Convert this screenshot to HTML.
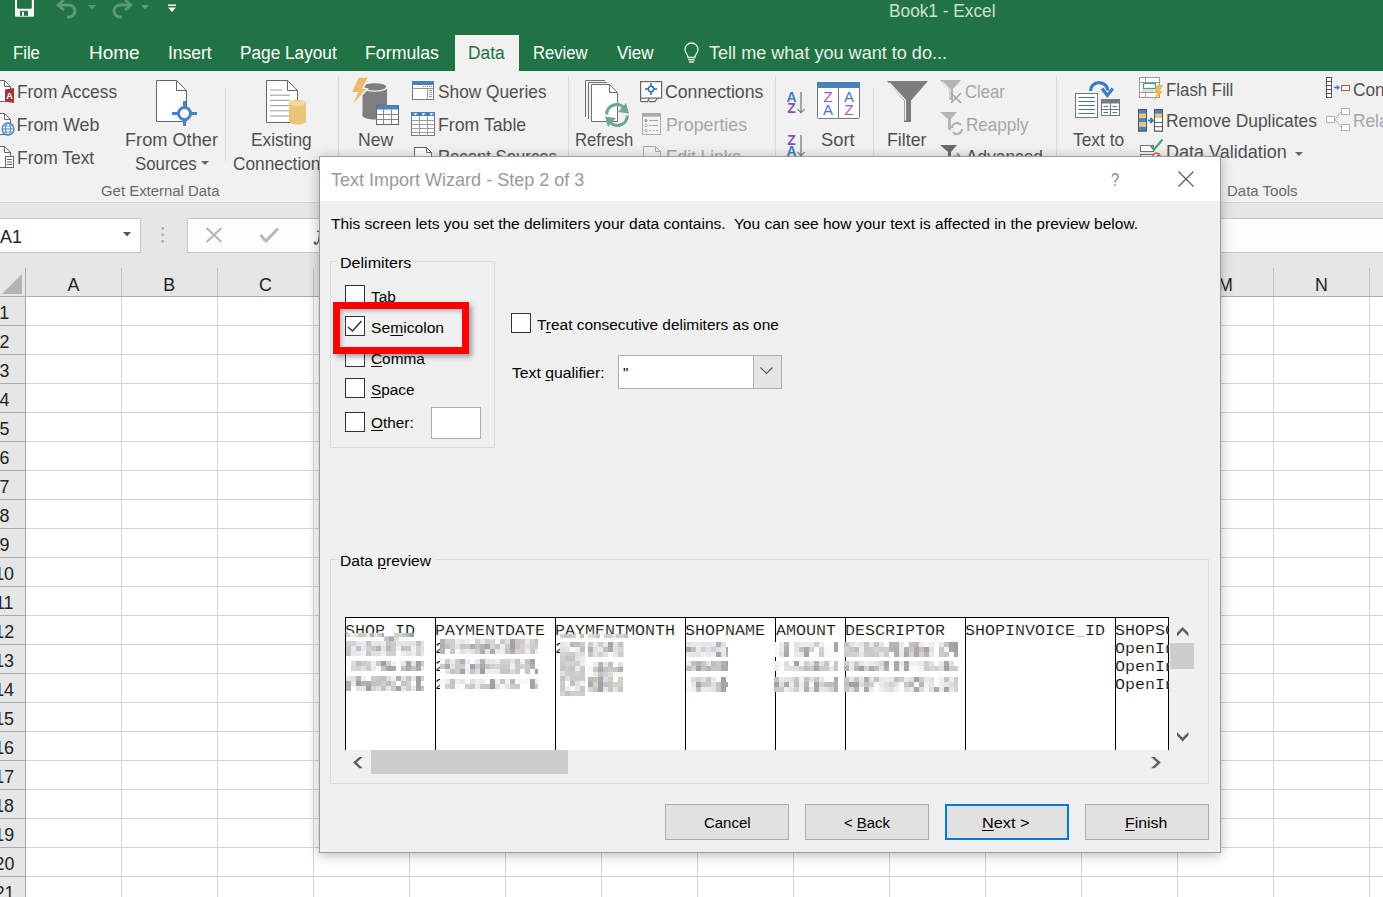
<!DOCTYPE html>
<html><head><meta charset="utf-8"><title>Excel</title>
<style>
html,body{margin:0;padding:0;}
body{width:1383px;height:897px;overflow:hidden;position:relative;background:#fff;font-family:'Liberation Sans', sans-serif;}
.t{position:absolute;white-space:pre;line-height:1;transform-origin:0 0;}
u{text-decoration:underline;text-underline-offset:2px;text-decoration-thickness:1px;}
</style></head><body>
<div style="position:absolute;left:0px;top:0px;width:1383px;height:71px;background:#217346;"></div><div style="position:absolute;left:455px;top:35px;width:64px;height:36px;background:#f1f1f1;"></div><div style="position:absolute;left:0px;top:71px;width:1383px;height:131px;background:#f1f1f1;"></div><div style="position:absolute;left:0px;top:202px;width:1383px;height:1px;background:#d5d5d5;"></div><div style="position:absolute;left:0px;top:203px;width:1383px;height:94px;background:#e6e6e6;"></div><div style="position:absolute;left:-2px;top:218px;width:143px;height:35px;background:#ffffff;box-sizing:border-box;border:1px solid #c6c6c6;"></div><div style="position:absolute;left:187px;top:218px;width:1300px;height:35px;background:#fdfdfd;box-sizing:border-box;border:1px solid #c6c6c6;"></div><div style="position:absolute;left:0px;top:297px;width:1383px;height:600px;background:#ffffff;"></div><div style="position:absolute;left:0px;top:297px;width:25px;height:600px;background:#e6e6e6;"></div><div style="position:absolute;left:25px;top:325px;width:1358px;height:1px;background:#d4d4d4;"></div><div style="position:absolute;left:0px;top:325px;width:25px;height:1px;background:#ababab;"></div><div style="position:absolute;left:25px;top:354px;width:1358px;height:1px;background:#d4d4d4;"></div><div style="position:absolute;left:0px;top:354px;width:25px;height:1px;background:#ababab;"></div><div style="position:absolute;left:25px;top:383px;width:1358px;height:1px;background:#d4d4d4;"></div><div style="position:absolute;left:0px;top:383px;width:25px;height:1px;background:#ababab;"></div><div style="position:absolute;left:25px;top:412px;width:1358px;height:1px;background:#d4d4d4;"></div><div style="position:absolute;left:0px;top:412px;width:25px;height:1px;background:#ababab;"></div><div style="position:absolute;left:25px;top:441px;width:1358px;height:1px;background:#d4d4d4;"></div><div style="position:absolute;left:0px;top:441px;width:25px;height:1px;background:#ababab;"></div><div style="position:absolute;left:25px;top:470px;width:1358px;height:1px;background:#d4d4d4;"></div><div style="position:absolute;left:0px;top:470px;width:25px;height:1px;background:#ababab;"></div><div style="position:absolute;left:25px;top:499px;width:1358px;height:1px;background:#d4d4d4;"></div><div style="position:absolute;left:0px;top:499px;width:25px;height:1px;background:#ababab;"></div><div style="position:absolute;left:25px;top:528px;width:1358px;height:1px;background:#d4d4d4;"></div><div style="position:absolute;left:0px;top:528px;width:25px;height:1px;background:#ababab;"></div><div style="position:absolute;left:25px;top:557px;width:1358px;height:1px;background:#d4d4d4;"></div><div style="position:absolute;left:0px;top:557px;width:25px;height:1px;background:#ababab;"></div><div style="position:absolute;left:25px;top:586px;width:1358px;height:1px;background:#d4d4d4;"></div><div style="position:absolute;left:0px;top:586px;width:25px;height:1px;background:#ababab;"></div><div style="position:absolute;left:25px;top:615px;width:1358px;height:1px;background:#d4d4d4;"></div><div style="position:absolute;left:0px;top:615px;width:25px;height:1px;background:#ababab;"></div><div style="position:absolute;left:25px;top:644px;width:1358px;height:1px;background:#d4d4d4;"></div><div style="position:absolute;left:0px;top:644px;width:25px;height:1px;background:#ababab;"></div><div style="position:absolute;left:25px;top:673px;width:1358px;height:1px;background:#d4d4d4;"></div><div style="position:absolute;left:0px;top:673px;width:25px;height:1px;background:#ababab;"></div><div style="position:absolute;left:25px;top:702px;width:1358px;height:1px;background:#d4d4d4;"></div><div style="position:absolute;left:0px;top:702px;width:25px;height:1px;background:#ababab;"></div><div style="position:absolute;left:25px;top:731px;width:1358px;height:1px;background:#d4d4d4;"></div><div style="position:absolute;left:0px;top:731px;width:25px;height:1px;background:#ababab;"></div><div style="position:absolute;left:25px;top:760px;width:1358px;height:1px;background:#d4d4d4;"></div><div style="position:absolute;left:0px;top:760px;width:25px;height:1px;background:#ababab;"></div><div style="position:absolute;left:25px;top:789px;width:1358px;height:1px;background:#d4d4d4;"></div><div style="position:absolute;left:0px;top:789px;width:25px;height:1px;background:#ababab;"></div><div style="position:absolute;left:25px;top:818px;width:1358px;height:1px;background:#d4d4d4;"></div><div style="position:absolute;left:0px;top:818px;width:25px;height:1px;background:#ababab;"></div><div style="position:absolute;left:25px;top:847px;width:1358px;height:1px;background:#d4d4d4;"></div><div style="position:absolute;left:0px;top:847px;width:25px;height:1px;background:#ababab;"></div><div style="position:absolute;left:25px;top:876px;width:1358px;height:1px;background:#d4d4d4;"></div><div style="position:absolute;left:0px;top:876px;width:25px;height:1px;background:#ababab;"></div><div style="position:absolute;left:25px;top:905px;width:1358px;height:1px;background:#d4d4d4;"></div><div style="position:absolute;left:0px;top:905px;width:25px;height:1px;background:#ababab;"></div><div style="position:absolute;left:121px;top:268px;width:1px;height:28px;background:#c6c6c6;"></div><div style="position:absolute;left:121px;top:297px;width:1px;height:600px;background:#d4d4d4;"></div><div style="position:absolute;left:217px;top:268px;width:1px;height:28px;background:#c6c6c6;"></div><div style="position:absolute;left:217px;top:297px;width:1px;height:600px;background:#d4d4d4;"></div><div style="position:absolute;left:313px;top:268px;width:1px;height:28px;background:#c6c6c6;"></div><div style="position:absolute;left:313px;top:297px;width:1px;height:600px;background:#d4d4d4;"></div><div style="position:absolute;left:409px;top:268px;width:1px;height:28px;background:#c6c6c6;"></div><div style="position:absolute;left:409px;top:297px;width:1px;height:600px;background:#d4d4d4;"></div><div style="position:absolute;left:505px;top:268px;width:1px;height:28px;background:#c6c6c6;"></div><div style="position:absolute;left:505px;top:297px;width:1px;height:600px;background:#d4d4d4;"></div><div style="position:absolute;left:601px;top:268px;width:1px;height:28px;background:#c6c6c6;"></div><div style="position:absolute;left:601px;top:297px;width:1px;height:600px;background:#d4d4d4;"></div><div style="position:absolute;left:697px;top:268px;width:1px;height:28px;background:#c6c6c6;"></div><div style="position:absolute;left:697px;top:297px;width:1px;height:600px;background:#d4d4d4;"></div><div style="position:absolute;left:793px;top:268px;width:1px;height:28px;background:#c6c6c6;"></div><div style="position:absolute;left:793px;top:297px;width:1px;height:600px;background:#d4d4d4;"></div><div style="position:absolute;left:889px;top:268px;width:1px;height:28px;background:#c6c6c6;"></div><div style="position:absolute;left:889px;top:297px;width:1px;height:600px;background:#d4d4d4;"></div><div style="position:absolute;left:985px;top:268px;width:1px;height:28px;background:#c6c6c6;"></div><div style="position:absolute;left:985px;top:297px;width:1px;height:600px;background:#d4d4d4;"></div><div style="position:absolute;left:1081px;top:268px;width:1px;height:28px;background:#c6c6c6;"></div><div style="position:absolute;left:1081px;top:297px;width:1px;height:600px;background:#d4d4d4;"></div><div style="position:absolute;left:1177px;top:268px;width:1px;height:28px;background:#c6c6c6;"></div><div style="position:absolute;left:1177px;top:297px;width:1px;height:600px;background:#d4d4d4;"></div><div style="position:absolute;left:1273px;top:268px;width:1px;height:28px;background:#c6c6c6;"></div><div style="position:absolute;left:1273px;top:297px;width:1px;height:600px;background:#d4d4d4;"></div><div style="position:absolute;left:1369px;top:268px;width:1px;height:28px;background:#c6c6c6;"></div><div style="position:absolute;left:1369px;top:297px;width:1px;height:600px;background:#d4d4d4;"></div><div style="position:absolute;left:0px;top:296px;width:1383px;height:1px;background:#ababab;"></div><div style="position:absolute;left:25px;top:268px;width:1px;height:629px;background:#ababab;"></div><svg style="position:absolute;left:0px;top:270px;overflow:visible;" width="24" height="26" viewBox="0 0 24 26"><polygon points="2,24 22,24 22,4" fill="#b4b4b4"/></svg><svg style="position:absolute;left:15px;top:-1px;overflow:visible;" width="19" height="18" viewBox="0 0 19 18"><rect x="0" y="0" width="19" height="17.7" rx="1.2" fill="#f4f4f4"/><path d="M2,0 H16.8 V8.7 L15.8,9.7 H3 L2,8.7 Z" fill="#217346"/><rect x="5" y="11.9" width="8" height="4.9" fill="#217346"/><rect x="7" y="12.9" width="2" height="3.9" fill="#f4f4f4"/></svg><svg style="position:absolute;left:56px;top:0px;overflow:visible;" width="24" height="20" viewBox="0 0 24 20"><path d="M4,5 H13 A6,6 0 0 1 13,17 H11" fill="none" stroke="#5d9a75" stroke-width="3"/><path d="M8,0 L2,5 L8,10" fill="none" stroke="#5d9a75" stroke-width="2.6"/></svg><svg style="position:absolute;left:88px;top:5px;overflow:visible;" width="9" height="6" viewBox="0 0 9 6"><polygon points="0,0 8,0 4,4.5" fill="#5d9a75"/></svg><svg style="position:absolute;left:109px;top:0px;overflow:visible;" width="24" height="20" viewBox="0 0 24 20"><path d="M20,5 H11 A6,6 0 0 0 11,17 H13" fill="none" stroke="#5d9a75" stroke-width="3"/><path d="M16,0 L22,5 L16,10" fill="none" stroke="#5d9a75" stroke-width="2.6"/></svg><svg style="position:absolute;left:141px;top:5px;overflow:visible;" width="9" height="6" viewBox="0 0 9 6"><polygon points="0,0 8,0 4,4.5" fill="#5d9a75"/></svg><svg style="position:absolute;left:168px;top:4px;overflow:visible;" width="9" height="9" viewBox="0 0 9 9"><rect x="0" y="0.5" width="8" height="1.4" fill="#fff"/><polygon points="0,3.5 8,3.5 4,8" fill="#fff"/></svg><svg style="position:absolute;left:683px;top:43px;overflow:visible;" width="18" height="22" viewBox="0 0 18 22"><path d="M5,14.5 C5,11 2,10 2,6.5 A6.5,6.5 0 0 1 15,6.5 C15,10 12,11 12,14.5 Z" fill="none" stroke="#e8efe9" stroke-width="1.3"/><rect x="5.2" y="16" width="6.6" height="1.4" fill="#e8efe9"/><rect x="6" y="18.3" width="5" height="1.4" fill="#e8efe9"/></svg><svg style="position:absolute;left:-4px;top:80px;overflow:visible;" width="15" height="22" viewBox="0 0 15 22"><path d="M0.5,0.5 H8.5 L14.5,6.5 V21.5 H0.5 Z" fill="#fff" stroke="#666" stroke-width="1"/><path d="M8.5,0.5 V6.5 H14.5" fill="none" stroke="#666" stroke-width="1"/></svg><svg style="position:absolute;left:5px;top:88px;overflow:visible;" width="10" height="16" viewBox="0 0 10 16"><path d="M0,1.5 L9,0 V15 L0,13.5 Z" fill="#a4373a"/><text x="4.5" y="11" font-family="Liberation Sans" font-size="9" font-weight="bold" fill="#fff" text-anchor="middle">A</text></svg><svg style="position:absolute;left:-4px;top:113px;overflow:visible;" width="15" height="22" viewBox="0 0 15 22"><path d="M0.5,0.5 H8.5 L14.5,6.5 V21.5 H0.5 Z" fill="#fff" stroke="#666" stroke-width="1"/><path d="M8.5,0.5 V6.5 H14.5" fill="none" stroke="#666" stroke-width="1"/></svg><svg style="position:absolute;left:1px;top:122px;overflow:visible;" width="15" height="15" viewBox="0 0 15 15"><circle cx="7" cy="7" r="6" fill="#fff" stroke="#4a82c3" stroke-width="1.3"/><ellipse cx="7" cy="7" rx="2.5" ry="6" fill="none" stroke="#4a82c3" stroke-width="1"/><line x1="1" y1="7" x2="13" y2="7" stroke="#4a82c3" stroke-width="1"/><line x1="2" y1="4" x2="12" y2="4" stroke="#4a82c3" stroke-width="0.8"/><line x1="2" y1="10" x2="12" y2="10" stroke="#4a82c3" stroke-width="0.8"/></svg><svg style="position:absolute;left:-4px;top:146px;overflow:visible;" width="15" height="22" viewBox="0 0 15 22"><path d="M0.5,0.5 H8.5 L14.5,6.5 V21.5 H0.5 Z" fill="#fff" stroke="#666" stroke-width="1"/><path d="M8.5,0.5 V6.5 H14.5" fill="none" stroke="#666" stroke-width="1"/></svg><svg style="position:absolute;left:5px;top:156px;overflow:visible;" width="10" height="13" viewBox="0 0 10 13"><rect x="0.5" y="0.5" width="8" height="11" fill="#fff" stroke="#666"/><line x1="2" y1="3.5" x2="7" y2="3.5" stroke="#666"/><line x1="2" y1="6" x2="7" y2="6" stroke="#666"/><line x1="2" y1="8.5" x2="7" y2="8.5" stroke="#666"/></svg><svg style="position:absolute;left:156px;top:80px;overflow:visible;" width="31" height="42" viewBox="0 0 31 42"><path d="M0.5,0.5 H20.5 L30.5,10.5 V41.5 H0.5 Z" fill="#fff" stroke="#666" stroke-width="1"/><path d="M20.5,0.5 V10.5 H30.5" fill="none" stroke="#666" stroke-width="1"/></svg><svg style="position:absolute;left:172px;top:101px;overflow:visible;" width="25" height="25" viewBox="0 0 25 25"><circle cx="12.5" cy="12.5" r="6" fill="#fff" stroke="#4a82c3" stroke-width="3"/><line x1="12.5" y1="0" x2="12.5" y2="6" stroke="#4a82c3" stroke-width="3"/><line x1="12.5" y1="19" x2="12.5" y2="25" stroke="#4a82c3" stroke-width="3"/><line x1="0" y1="12.5" x2="6" y2="12.5" stroke="#4a82c3" stroke-width="3"/><line x1="19" y1="12.5" x2="25" y2="12.5" stroke="#4a82c3" stroke-width="3"/></svg><svg style="position:absolute;left:201px;top:161px;overflow:visible;" width="9" height="5" viewBox="0 0 9 5"><polygon points="0,0 8,0 4,4" fill="#666"/></svg><div style="position:absolute;left:225px;top:88px;width:1px;height:73px;background:#dadada;"></div><svg style="position:absolute;left:266px;top:80px;overflow:visible;" width="32" height="43" viewBox="0 0 32 43"><path d="M0.5,0.5 H21.5 L31.5,10.5 V42.5 H0.5 Z" fill="#fff" stroke="#666" stroke-width="1"/><path d="M21.5,0.5 V10.5 H31.5" fill="none" stroke="#666" stroke-width="1"/></svg><svg style="position:absolute;left:270px;top:88px;overflow:visible;" width="20" height="30" viewBox="0 0 20 30"><line x1="0" y1="2.0" x2="12" y2="2.0" stroke="#999" stroke-width="1"/><line x1="0" y1="7.2" x2="20" y2="7.2" stroke="#999" stroke-width="1"/><line x1="0" y1="12.4" x2="20" y2="12.4" stroke="#999" stroke-width="1"/><line x1="0" y1="17.6" x2="20" y2="17.6" stroke="#999" stroke-width="1"/><line x1="0" y1="22.8" x2="20" y2="22.8" stroke="#999" stroke-width="1"/><line x1="0" y1="28.0" x2="20" y2="28.0" stroke="#999" stroke-width="1"/></svg><svg style="position:absolute;left:289px;top:100px;overflow:visible;" width="18" height="25" viewBox="0 0 18 25"><rect x="0" y="3" width="17" height="19" fill="#ecc57a"/><ellipse cx="8.5" cy="3.5" rx="8.5" ry="3" fill="#f3d89f" stroke="#ecc57a"/><ellipse cx="8.5" cy="21.5" rx="8.5" ry="3" fill="#ecc57a"/></svg><div style="position:absolute;left:338px;top:76px;width:1px;height:85px;background:#dadada;"></div><svg style="position:absolute;left:362px;top:82px;overflow:visible;" width="26" height="38" viewBox="0 0 26 38"><rect x="0.5" y="4.5" width="24.5" height="29.5" fill="#7f7f7f"/><ellipse cx="12.75" cy="4.8" rx="12.25" ry="4.3" fill="#7f7f7f" stroke="#f4f4f4" stroke-width="1.3"/><ellipse cx="12.75" cy="33.5" rx="12.25" ry="4" fill="#7f7f7f"/></svg><svg style="position:absolute;left:349px;top:75px;overflow:visible;" width="22" height="34" viewBox="0 0 22 34"><polygon points="9.3,2 19.9,2 14.2,13 18.4,14 2,32 8.1,17.8 2,17.5" fill="#e8bd6e" stroke="#f1f1f1" stroke-width="1.6" stroke-linejoin="miter"/></svg><svg style="position:absolute;left:376px;top:105px;overflow:visible;" width="24" height="21" viewBox="0 0 24 21"><rect x="0.5" y="0.5" width="22" height="19" fill="#fff" stroke="#666"/><rect x="0.5" y="0.5" width="22" height="4" fill="#4a82c3"/><line x1="0.5" y1="9.5" x2="22.5" y2="9.5" stroke="#888"/><line x1="0.5" y1="14.5" x2="22.5" y2="14.5" stroke="#888"/><line x1="7.5" y1="4.5" x2="7.5" y2="19.5" stroke="#888"/><line x1="15.5" y1="4.5" x2="15.5" y2="19.5" stroke="#888"/></svg><svg style="position:absolute;left:412px;top:81px;overflow:visible;" width="22" height="19" viewBox="0 0 22 19"><rect x="0.5" y="0.5" width="21" height="18" fill="#fff" stroke="#777"/><rect x="0" y="0" width="22" height="4" fill="#4a80bd"/><rect x="11" y="5" width="1" height="1" fill="#888"/><rect x="13" y="5" width="1" height="1" fill="#888"/><rect x="15" y="5" width="1" height="1" fill="#888"/><rect x="17" y="5" width="1" height="1" fill="#888"/><rect x="19" y="5" width="1" height="1" fill="#888"/><line x1="0.5" y1="7.5" x2="21.5" y2="7.5" stroke="#999"/><line x1="15.5" y1="7.5" x2="15.5" y2="18.5" stroke="#999"/><line x1="17" y1="9.5" x2="20" y2="9.5" stroke="#999"/><line x1="17" y1="11.5" x2="20" y2="11.5" stroke="#999"/><line x1="17" y1="13.5" x2="20" y2="13.5" stroke="#999"/><line x1="17" y1="15.5" x2="20" y2="15.5" stroke="#999"/></svg><svg style="position:absolute;left:411px;top:112px;overflow:visible;" width="24" height="24" viewBox="0 0 24 24"><rect x="0.5" y="0.5" width="23" height="23" fill="#fff" stroke="#777"/><rect x="0" y="0" width="24" height="4" fill="#4a80bd"/><line x1="0.5" y1="8.5" x2="23.5" y2="8.5" stroke="#9a9a9a"/><line x1="0.5" y1="12.5" x2="23.5" y2="12.5" stroke="#9a9a9a"/><line x1="0.5" y1="16.5" x2="23.5" y2="16.5" stroke="#9a9a9a"/><line x1="0.5" y1="20.5" x2="23.5" y2="20.5" stroke="#9a9a9a"/><line x1="8.5" y1="4" x2="8.5" y2="23.5" stroke="#9a9a9a"/><line x1="16.5" y1="4" x2="16.5" y2="23.5" stroke="#9a9a9a"/><polygon points="2.5,1.2 6.5,1.2 4.5,3.4" fill="#fff"/><polygon points="10.5,1.2 14.5,1.2 12.5,3.4" fill="#fff"/><polygon points="18.5,1.2 22.5,1.2 20.5,3.4" fill="#fff"/></svg><svg style="position:absolute;left:414px;top:147px;overflow:visible;" width="18" height="23" viewBox="0 0 18 23"><path d="M0.5,0.5 H12.5 L17.5,5.5 V22.5 H0.5 Z" fill="#fff" stroke="#666" stroke-width="1"/><path d="M12.5,0.5 V5.5 H17.5" fill="none" stroke="#666" stroke-width="1"/></svg><div style="position:absolute;left:568px;top:76px;width:1px;height:85px;background:#dadada;"></div><svg style="position:absolute;left:584px;top:79px;overflow:visible;" width="40" height="46" viewBox="0 0 40 46"><path d="M1.5,38 V1.5 H21" fill="none" stroke="#707070"/><path d="M4.5,40 V3.5 H23" fill="none" stroke="#707070"/><path d="M7.5,5.5 H25.5 L33.5,13.5 V42.5 H7.5 Z" fill="#fff" stroke="#707070"/><path d="M25.5,5.5 V13.5 H33.5" fill="none" stroke="#707070"/></svg><svg style="position:absolute;left:604px;top:102px;overflow:visible;" width="26" height="26" viewBox="0 0 26 26"><path d="M2.6,12.5 A10,10 0 0 1 21.5,8" fill="none" stroke="#6fa792" stroke-width="3.2"/><polygon points="22,1 25,11.5 14,10" fill="#6fa792"/><path d="M23.4,13.5 A10,10 0 0 1 4.5,18" fill="none" stroke="#6fa792" stroke-width="3.2"/><polygon points="4,25 1,14.5 12,16" fill="#6fa792"/></svg><svg style="position:absolute;left:640px;top:81px;overflow:visible;" width="23" height="22" viewBox="0 0 23 22"><rect x="0.6" y="0.6" width="21" height="16.5" fill="#fff" stroke="#666" stroke-width="1.2"/><path d="M0.6,17 V19.8 Q0.6,20.6 1.6,20.6 H7.5 L9.5,17" fill="none" stroke="#666" stroke-width="1.2"/><path d="M9,19.8 Q9,20.6 10,20.6 H15 L17.5,17" fill="none" stroke="#666" stroke-width="1.2"/><line x1="11" y1="2" x2="11" y2="14" stroke="#2f6eb5" stroke-width="1.6"/><line x1="5" y1="8" x2="17" y2="8" stroke="#2f6eb5" stroke-width="1.6"/><circle cx="11" cy="8" r="2.7" fill="#fff" stroke="#2f6eb5" stroke-width="1.5"/></svg><svg style="position:absolute;left:642px;top:113px;overflow:visible;" width="20" height="24" viewBox="0 0 20 24"><rect x="0.5" y="0.5" width="18" height="21" fill="#f6f2f6" stroke="#aaa"/><rect x="0.5" y="0.5" width="18" height="3.2" fill="#aaa"/><circle cx="4" cy="7.5" r="1.2" fill="#aaa" stroke="#aaa"/><circle cx="4" cy="12.5" r="1.2" fill="none" stroke="#aaa"/><circle cx="4" cy="17.5" r="1.2" fill="none" stroke="#aaa"/><line x1="7" y1="7.5" x2="16" y2="7.5" stroke="#aaa"/><line x1="7" y1="12.5" x2="16" y2="12.5" stroke="#aaa"/><line x1="7" y1="17.5" x2="16" y2="17.5" stroke="#aaa" stroke-dasharray="2,1.5"/></svg><svg style="position:absolute;left:643px;top:146px;overflow:visible;" width="18" height="23" viewBox="0 0 18 23"><path d="M0.5,0.5 H12.5 L17.5,5.5 V22.5 H0.5 Z" fill="#f4f0f4" stroke="#aaa" stroke-width="1"/><path d="M12.5,0.5 V5.5 H17.5" fill="none" stroke="#aaa" stroke-width="1"/></svg><div style="position:absolute;left:775px;top:76px;width:1px;height:85px;background:#dadada;"></div><svg style="position:absolute;left:785px;top:89px;overflow:visible;" width="22" height="26" viewBox="0 0 22 26"><text x="6.5" y="12.6" font-family="Liberation Sans" font-weight="bold" font-size="14" fill="#3f7cc0" text-anchor="middle">A</text><text x="6.5" y="24.2" font-family="Liberation Sans" font-weight="bold" font-size="14" fill="#8a4fb5" text-anchor="middle">Z</text><line x1="16" y1="3" x2="16" y2="23.5" stroke="#666" stroke-width="1.1"/><path d="M12.5,20 L16,23.8 L19.5,20" fill="none" stroke="#666" stroke-width="1.1"/></svg><svg style="position:absolute;left:785px;top:132px;overflow:visible;" width="22" height="28" viewBox="0 0 22 28"><text x="6.5" y="12.6" font-family="Liberation Sans" font-weight="bold" font-size="14" fill="#8a4fb5" text-anchor="middle">Z</text><text x="6.5" y="24.2" font-family="Liberation Sans" font-weight="bold" font-size="14" fill="#3f7cc0" text-anchor="middle">A</text><line x1="16" y1="3" x2="16" y2="23.5" stroke="#666" stroke-width="1.1"/><path d="M12.5,20 L16,23.8 L19.5,20" fill="none" stroke="#666" stroke-width="1.1"/></svg><svg style="position:absolute;left:817px;top:82px;overflow:visible;" width="44" height="38" viewBox="0 0 44 38"><rect x="0.5" y="0.5" width="42" height="36" rx="1" fill="#fff" stroke="#777"/><rect x="0" y="0" width="43" height="6" fill="#4a80bd"/><line x1="21.5" y1="6" x2="21.5" y2="37" stroke="#777"/><text x="11" y="20" font-family="Liberation Sans" font-size="15" fill="#9a55c0" text-anchor="middle">Z</text><text x="11" y="33" font-family="Liberation Sans" font-size="15" fill="#3f7cc0" text-anchor="middle">A</text><text x="32" y="20" font-family="Liberation Sans" font-size="15" fill="#3f7cc0" text-anchor="middle">A</text><text x="32" y="33" font-family="Liberation Sans" font-size="15" fill="#9a55c0" text-anchor="middle">Z</text></svg><div style="position:absolute;left:873px;top:88px;width:1px;height:70px;background:#dadada;"></div><svg style="position:absolute;left:886px;top:80px;overflow:visible;" width="43" height="43" viewBox="0 0 43 43"><path d="M1,1 H42 L25,20.5 V42 H18 V20.5 Z" fill="#7c7c7c"/><path d="M3.2,2.8 L19.4,20.3 V40.5" fill="none" stroke="#f1f1f1" stroke-width="1.4"/></svg><svg style="position:absolute;left:939px;top:79px;overflow:visible;" width="26" height="25" viewBox="0 0 26 25"><path d="M1,1 H22 L14,10 V22 L10,20 V10 Z" fill="#b4b4b4"/><path d="M4,3 L11,10 V19" fill="none" stroke="#f1f1f1" stroke-width="1"/><path d="M12,14 L22,24 M22,14 L12,24" stroke="#a0a0a0" stroke-width="1.5"/></svg><svg style="position:absolute;left:939px;top:111px;overflow:visible;" width="26" height="26" viewBox="0 0 26 26"><path d="M1,1 H18 L12,8 V20 L9,18 V8 Z" fill="#b4b4b4"/><path d="M13,17 A5,5 0 0 1 22,14" fill="none" stroke="#b4b4b4" stroke-width="2.2"/><path d="M23,18 A5,5 0 0 1 14,21" fill="none" stroke="#b4b4b4" stroke-width="2.2"/></svg><svg style="position:absolute;left:939px;top:144px;overflow:visible;" width="26" height="16" viewBox="0 0 26 16"><path d="M1,1 H18 L12,8 V20 L9,18 V8 Z" fill="#6a6a6a"/><path d="M15,12 L20,12 M18,9 L21,12 L18,15" stroke="#4a82c3" stroke-width="1.2" fill="none"/></svg><div style="position:absolute;left:1056px;top:76px;width:1px;height:85px;background:#dadada;"></div><svg style="position:absolute;left:1074px;top:79px;overflow:visible;" width="48" height="40" viewBox="0 0 48 40"><path d="M16.5,12 A8.6,8.2 0 0 1 33.7,11.5" fill="none" stroke="#3d7bc2" stroke-width="3.2"/><path d="M28,9.5 L33.3,16.5 L38.8,9.5" fill="none" stroke="#3d7bc2" stroke-width="3.2" stroke-linejoin="miter"/><rect x="1.5" y="14.5" width="22" height="24" fill="#fff" stroke="#777"/><line x1="4.5" y1="18.5" x2="21" y2="18.5" stroke="#3c78c0" stroke-width="1"/><line x1="4.5" y1="22.5" x2="21" y2="22.5" stroke="#3c78c0" stroke-width="1"/><line x1="4.5" y1="26.5" x2="21" y2="26.5" stroke="#3c78c0" stroke-width="1"/><line x1="4.5" y1="30.5" x2="21" y2="30.5" stroke="#3c78c0" stroke-width="1"/><line x1="4.5" y1="34.5" x2="21" y2="34.5" stroke="#3c78c0" stroke-width="1"/><rect x="27.5" y="20.5" width="18" height="16" fill="#fff" stroke="#777"/><rect x="27" y="20" width="19" height="4.5" fill="#7a7a7a"/><line x1="36.5" y1="24" x2="36.5" y2="36.5" stroke="#777"/><line x1="27.5" y1="30.5" x2="45.5" y2="30.5" stroke="#777"/><line x1="29.5" y1="27.5" x2="34" y2="27.5" stroke="#3c78c0"/><line x1="38.5" y1="27.5" x2="43" y2="27.5" stroke="#3c78c0"/><line x1="29.5" y1="33.5" x2="34" y2="33.5" stroke="#3c78c0"/><line x1="38.5" y1="33.5" x2="43" y2="33.5" stroke="#3c78c0"/></svg><svg style="position:absolute;left:1139px;top:77px;overflow:visible;" width="25" height="25" viewBox="0 0 25 25"><rect x="0.5" y="0.5" width="20" height="20" fill="#fff" stroke="#999"/><line x1="0.5" y1="5.5" x2="20.5" y2="5.5" stroke="#999"/><line x1="0.5" y1="15.5" x2="20.5" y2="15.5" stroke="#999"/><line x1="6.5" y1="0.5" x2="6.5" y2="20.5" stroke="#999"/><rect x="4.5" y="6.5" width="12" height="5" fill="#fff" stroke="#4aa07a" stroke-width="1.2"/><rect x="3" y="12" width="12" height="3" fill="#ddd"/><polygon points="18,8 24,8 21,14 24,14 15,24 18,16 15,16" fill="#e9b95d"/></svg><svg style="position:absolute;left:1138px;top:109px;overflow:visible;" width="26" height="23" viewBox="0 0 26 23"><rect x="0.5" y="0.5" width="8" height="21.5" fill="#fff" stroke="#555"/><rect x="16.5" y="0.5" width="8" height="21.5" fill="#fff" stroke="#555"/><rect x="1" y="0.5" width="7" height="4.3" fill="#4a80bd"/><rect x="17" y="0.5" width="7" height="4.3" fill="#4a80bd"/><rect x="1" y="4.8" width="7" height="4.3" fill="#eec47c"/><rect x="17" y="4.8" width="7" height="4.3" fill="#eec47c"/><rect x="1" y="9.1" width="7" height="4.3" fill="#4a80bd"/><rect x="17" y="9.1" width="7" height="4.3" fill="#fff"/><rect x="1" y="13.4" width="7" height="4.3" fill="#eec47c"/><rect x="17" y="13.4" width="7" height="4.3" fill="#fff"/><rect x="1" y="17.7" width="7" height="4.3" fill="#4a80bd"/><rect x="17" y="17.7" width="7" height="4.3" fill="#fff"/><rect x="0.5" y="0.5" width="8" height="21.5" fill="none" stroke="#555"/><rect x="16.5" y="0.5" width="8" height="21.5" fill="none" stroke="#555"/><line x1="16.5" y1="13.4" x2="24.5" y2="13.4" stroke="#555"/><line x1="16.5" y1="17.7" x2="24.5" y2="17.7" stroke="#555"/><path d="M10,11.5 H15 M12.3,8.8 L15,11.5 L12.3,14.2" stroke="#3c78c0" stroke-width="1.8" fill="none"/></svg><svg style="position:absolute;left:1139px;top:138px;overflow:visible;" width="25" height="24" viewBox="0 0 25 24"><rect x="1.5" y="7.5" width="13" height="6" fill="#fff" stroke="#777"/><rect x="1.5" y="16.5" width="13" height="6" fill="#fff" stroke="#777"/><path d="M11.5,7.5 L15,11.5 L23.5,1.5" fill="none" stroke="#4aa383" stroke-width="2.2"/><circle cx="17.5" cy="19" r="3.8" fill="#fff" stroke="#d65a3c" stroke-width="1.4"/><line x1="15" y1="21.5" x2="20" y2="16.5" stroke="#d65a3c" stroke-width="1.2"/></svg><svg style="position:absolute;left:1295px;top:152px;overflow:visible;" width="9" height="5" viewBox="0 0 9 5"><polygon points="0,0 8,0 4,4" fill="#666"/></svg><svg style="position:absolute;left:1326px;top:77px;overflow:visible;" width="26" height="23" viewBox="0 0 26 23"><rect x="0.5" y="0.5" width="5" height="20" fill="#fff" stroke="#555"/><line x1="0.5" y1="4.5" x2="5.5" y2="4.5" stroke="#555"/><line x1="0.5" y1="8.5" x2="5.5" y2="8.5" stroke="#555"/><line x1="0.5" y1="12.5" x2="5.5" y2="12.5" stroke="#555"/><line x1="0.5" y1="16.5" x2="5.5" y2="16.5" stroke="#555"/><path d="M8,10.5 H13 M11,8.5 L13,10.5 L11,12.5" stroke="#3c78c0" stroke-width="1.3" fill="none"/><rect x="15.5" y="8.5" width="8" height="5" fill="#fff" stroke="#d24b3c"/></svg><svg style="position:absolute;left:1326px;top:108px;overflow:visible;" width="26" height="24" viewBox="0 0 26 24"><rect x="0.5" y="8.5" width="8" height="6" fill="#fff" stroke="#b0b0b0"/><rect x="15.5" y="0.5" width="8" height="6" fill="#fff" stroke="#b0b0b0"/><rect x="15.5" y="16.5" width="8" height="6" fill="#fff" stroke="#b0b0b0"/><path d="M9,11.5 L15,4 M9,11.5 L15,19" stroke="#b0b0b0" fill="none"/></svg><svg style="position:absolute;left:123px;top:232px;overflow:visible;" width="9" height="5" viewBox="0 0 9 5"><polygon points="0,0 8,0 4,4.5" fill="#555"/></svg><svg style="position:absolute;left:161px;top:226px;overflow:visible;" width="4" height="18" viewBox="0 0 4 18"><rect x="0.5" y="1" width="2.5" height="2.5" fill="#aaa"/><rect x="0.5" y="7.5" width="2.5" height="2.5" fill="#aaa"/><rect x="0.5" y="14" width="2.5" height="2.5" fill="#aaa"/></svg><svg style="position:absolute;left:205px;top:227px;overflow:visible;" width="19" height="16" viewBox="0 0 19 16"><path d="M1.5,1 L16.5,15 M16.5,1 L1.5,15" stroke="#b8b8b8" stroke-width="2.2"/></svg><svg style="position:absolute;left:259px;top:227px;overflow:visible;" width="21" height="16" viewBox="0 0 21 16"><path d="M1.5,8 L7,14 L19,1.5" fill="none" stroke="#b8b8b8" stroke-width="3"/></svg><svg style="position:absolute;left:312px;top:229px;overflow:visible;" width="10" height="18" viewBox="0 0 10 18"><path d="M5,2.3 H8" stroke="#555" stroke-width="1.3"/><path d="M7.6,2.5 C7.4,7 7,11 6,13.5 C5,15.6 3,15.6 2.6,14.2" fill="none" stroke="#555" stroke-width="1.3"/><circle cx="3" cy="13.9" r="1.4" fill="#555"/></svg><div style="position:absolute;left:319px;top:156px;width:902px;height:697px;box-sizing:border-box;border:1px solid #9c9c9c;background:#f0f0f0;box-shadow:0 2px 12px rgba(0,0,0,0.28);z-index:5"></div><div style="position:absolute;left:320px;top:157px;width:900px;height:44px;background:#ffffff;z-index:6;"></div><svg style="position:absolute;left:1178px;top:171px;overflow:visible;z-index:6;" width="16" height="16" viewBox="0 0 16 16"><path d="M0.5,0.5 L15.5,15.5 M15.5,0.5 L0.5,15.5" stroke="#555" stroke-width="1.1"/></svg><div style="position:absolute;left:330px;top:261px;width:165px;height:187px;background:transparent;z-index:6;box-sizing:border-box;border:1px solid #dcdcdc;"></div><div style="position:absolute;left:337px;top:254px;width:77px;height:14px;background:#f0f0f0;z-index:6;"></div><svg style="position:absolute;left:345px;top:285px;overflow:visible;z-index:6;" width="20" height="20" viewBox="0 0 20 20"><rect x="0.5" y="0.5" width="19" height="19" fill="#fff" stroke="#333" stroke-width="1"/></svg><svg style="position:absolute;left:345px;top:316px;overflow:visible;z-index:6;" width="20" height="20" viewBox="0 0 20 20"><rect x="0.5" y="0.5" width="19" height="19" fill="#fff" stroke="#333" stroke-width="1"/><path d="M3,11 L7.5,15 L16.5,5" fill="none" stroke="#333" stroke-width="1.5"/></svg><svg style="position:absolute;left:345px;top:347px;overflow:visible;z-index:6;" width="20" height="20" viewBox="0 0 20 20"><rect x="0.5" y="0.5" width="19" height="19" fill="#fff" stroke="#333" stroke-width="1"/></svg><svg style="position:absolute;left:345px;top:378px;overflow:visible;z-index:6;" width="20" height="20" viewBox="0 0 20 20"><rect x="0.5" y="0.5" width="19" height="19" fill="#fff" stroke="#333" stroke-width="1"/></svg><svg style="position:absolute;left:345px;top:412px;overflow:visible;z-index:6;" width="20" height="20" viewBox="0 0 20 20"><rect x="0.5" y="0.5" width="19" height="19" fill="#fff" stroke="#333" stroke-width="1"/></svg><div style="position:absolute;left:431px;top:407px;width:50px;height:32px;background:#fff;z-index:6;box-sizing:border-box;border:1px solid #adadad;"></div><div style="position:absolute;left:333px;top:302px;width:136px;height:52px;background:transparent;z-index:7;box-sizing:border-box;border:7px solid #ff0000;box-shadow:3px 3px 5px rgba(0,0,0,0.35), inset 2px 2px 4px rgba(0,0,0,0.25);"></div><svg style="position:absolute;left:511px;top:313px;overflow:visible;z-index:6;" width="20" height="20" viewBox="0 0 20 20"><rect x="0.5" y="0.5" width="19" height="19" fill="#fff" stroke="#333" stroke-width="1"/></svg><div style="position:absolute;left:618px;top:355px;width:164px;height:34px;background:#fff;z-index:6;box-sizing:border-box;border:1px solid #adadad;"></div><div style="position:absolute;left:753px;top:356px;width:28px;height:32px;background:#e5e5e5;z-index:6;box-sizing:border-box;border-left:1px solid #adadad;"></div><svg style="position:absolute;left:760px;top:367px;overflow:visible;z-index:6;" width="13" height="8" viewBox="0 0 13 8"><path d="M0.5,0.5 L6.5,6.5 L12.5,0.5" fill="none" stroke="#555" stroke-width="1.1"/></svg><div style="position:absolute;left:330px;top:559px;width:879px;height:225px;background:transparent;z-index:6;box-sizing:border-box;border:1px solid #dcdcdc;"></div><div style="position:absolute;left:337px;top:552px;width:98px;height:14px;background:#f0f0f0;z-index:6;"></div><div style="position:absolute;left:345px;top:617px;width:824px;height:133px;background:#ffffff;z-index:6;"></div><div style="position:absolute;left:345px;top:617px;width:824px;height:1px;background:#000;z-index:6;"></div><div style="position:absolute;left:345px;top:617px;width:1px;height:133px;background:#000;z-index:6;"></div><div style="position:absolute;left:435px;top:617px;width:1px;height:133px;background:#000;z-index:6;"></div><div style="position:absolute;left:555px;top:617px;width:1px;height:133px;background:#000;z-index:6;"></div><div style="position:absolute;left:685px;top:617px;width:1px;height:133px;background:#000;z-index:6;"></div><div style="position:absolute;left:775px;top:617px;width:1px;height:133px;background:#000;z-index:6;"></div><div style="position:absolute;left:845px;top:617px;width:1px;height:133px;background:#000;z-index:6;"></div><div style="position:absolute;left:965px;top:617px;width:1px;height:133px;background:#000;z-index:6;"></div><div style="position:absolute;left:1115px;top:617px;width:1px;height:133px;background:#000;z-index:6;"></div><div style="position:absolute;left:1168px;top:617px;width:1px;height:133px;background:#000;z-index:6;"></div><svg style="position:absolute;left:1176.8px;top:627px;overflow:visible;z-index:8;" width="12" height="10" viewBox="0 0 12 10"><polygon points="0,9.4 0,5.8 5.6,0 11.4,5.8 11.4,9.4 5.6,3.6" fill="#606060"/></svg><div style="position:absolute;left:1170px;top:643px;width:24px;height:26px;background:#cdcdcd;z-index:8;"></div><svg style="position:absolute;left:1176.8px;top:732px;overflow:visible;z-index:8;" width="12" height="10" viewBox="0 0 12 10"><polygon points="0,0 0,3.6 5.6,9.4 11.4,3.6 11.4,0 5.6,5.8" fill="#606060"/></svg><svg style="position:absolute;left:352.6px;top:757px;overflow:visible;z-index:6;" width="10" height="12" viewBox="0 0 10 12"><polygon points="9.8,0 6.2,0 0,5.6 6.2,11.2 9.8,11.2 3.6,5.6" fill="#606060"/></svg><div style="position:absolute;left:371px;top:750px;width:197px;height:24px;background:#cdcdcd;z-index:6;"></div><svg style="position:absolute;left:1150.8px;top:757px;overflow:visible;z-index:6;" width="10" height="12" viewBox="0 0 10 12"><polygon points="0,0 3.6,0 9.8,5.6 3.6,11.2 0,11.2 6.2,5.6" fill="#606060"/></svg><div style="position:absolute;left:1169px;top:618px;width:39px;height:131px;background:#f0f0f0;z-index:7;"></div><div style="position:absolute;left:665px;top:804px;width:124px;height:36px;background:#e1e1e1;z-index:6;box-sizing:border-box;border:1px solid #adadad;"></div><div style="position:absolute;left:805px;top:804px;width:124px;height:36px;background:#e1e1e1;z-index:6;box-sizing:border-box;border:1px solid #adadad;"></div><div style="position:absolute;left:945px;top:804px;width:124px;height:36px;background:#e1e1e1;z-index:6;box-sizing:border-box;border:2px solid #0078d7;"></div><div style="position:absolute;left:1085px;top:804px;width:124px;height:36px;background:#e1e1e1;z-index:6;box-sizing:border-box;border:1px solid #adadad;"></div><svg style="position:absolute;left:346px;top:633px;overflow:visible;z-index:9;" width="38" height="4" viewBox="0 0 38 4"><rect x="0" y="0" width="4" height="4" fill="#d7d1d6"/><rect x="4" y="0" width="4" height="4" fill="#ebeaee"/><rect x="8" y="0" width="4" height="4" fill="#e0ded9"/><rect x="12" y="0" width="4" height="4" fill="#cac7c1"/><rect x="16" y="0" width="4" height="4" fill="#cbcacd"/><rect x="20" y="0" width="4" height="4" fill="#e8e7e1"/><rect x="24" y="0" width="4" height="4" fill="#b2aeac"/><rect x="28" y="0" width="4" height="4" fill="#e5e0de"/><rect x="32" y="0" width="4" height="4" fill="#c9c7c5"/><rect x="36" y="0" width="2" height="4" fill="#a7acaa"/></svg><svg style="position:absolute;left:394px;top:633px;overflow:visible;z-index:9;" width="20" height="4" viewBox="0 0 20 4"><rect x="0" y="0" width="4" height="4" fill="#cfcfd4"/><rect x="4" y="0" width="4" height="4" fill="#d1d4da"/><rect x="8" y="0" width="4" height="4" fill="#c8c9c3"/><rect x="12" y="0" width="4" height="4" fill="#b3b8b4"/><rect x="16" y="0" width="4" height="4" fill="#9aa0a1"/></svg><svg style="position:absolute;left:384px;top:637px;overflow:visible;z-index:9;" width="15" height="5" viewBox="0 0 15 5"><rect x="0" y="0" width="5" height="5" fill="#c4c4c8"/><rect x="5" y="0" width="5" height="5" fill="#acaca9"/><rect x="10" y="0" width="5" height="5" fill="#dbdeda"/></svg><svg style="position:absolute;left:560px;top:634px;overflow:visible;z-index:9;" width="68" height="4" viewBox="0 0 68 4"><rect x="0" y="0" width="4" height="4" fill="#d2cfcb"/><rect x="4" y="0" width="4" height="4" fill="#c2c4c1"/><rect x="8" y="0" width="4" height="4" fill="#c2c6cb"/><rect x="12" y="0" width="4" height="4" fill="#ced1d5"/><rect x="16" y="0" width="4" height="4" fill="#fffdf8"/><rect x="20" y="0" width="4" height="4" fill="#c3c1bf"/><rect x="24" y="0" width="4" height="4" fill="#fafafd"/><rect x="28" y="0" width="4" height="4" fill="#dce0dd"/><rect x="32" y="0" width="4" height="4" fill="#d7d4d7"/><rect x="36" y="0" width="4" height="4" fill="#cbc6c0"/><rect x="40" y="0" width="4" height="4" fill="#fafdf7"/><rect x="44" y="0" width="4" height="4" fill="#ced2cd"/><rect x="48" y="0" width="4" height="4" fill="#cdced2"/><rect x="52" y="0" width="4" height="4" fill="#e5e2dc"/><rect x="56" y="0" width="4" height="4" fill="#d0cbc9"/><rect x="60" y="0" width="4" height="4" fill="#cfd4d5"/><rect x="64" y="0" width="4" height="4" fill="#bdc2c3"/></svg><svg style="position:absolute;left:346px;top:641px;overflow:visible;z-index:9;" width="78" height="15" viewBox="0 0 78 15"><rect x="0" y="0" width="5" height="5" fill="#ccd2d5"/><rect x="5" y="0" width="5" height="5" fill="#cfd4d2"/><rect x="10" y="0" width="5" height="5" fill="#e8e8ed"/><rect x="15" y="0" width="5" height="5" fill="#edeced"/><rect x="20" y="0" width="5" height="5" fill="#c4c2c8"/><rect x="25" y="0" width="5" height="5" fill="#eae7e2"/><rect x="30" y="0" width="5" height="5" fill="#eae5e0"/><rect x="35" y="0" width="5" height="5" fill="#ebede7"/><rect x="40" y="0" width="5" height="5" fill="#c8c4c7"/><rect x="45" y="0" width="5" height="5" fill="#cecacb"/><rect x="50" y="0" width="5" height="5" fill="#e4e5e5"/><rect x="55" y="0" width="5" height="5" fill="#e8e4e4"/><rect x="60" y="0" width="5" height="5" fill="#e1e4e4"/><rect x="65" y="0" width="5" height="5" fill="#e0e4e0"/><rect x="70" y="0" width="5" height="5" fill="#c6c1bc"/><rect x="75" y="0" width="3" height="5" fill="#e2e6e1"/><rect x="0" y="5" width="5" height="5" fill="#c5c8c8"/><rect x="5" y="5" width="5" height="5" fill="#ede8eb"/><rect x="10" y="5" width="5" height="5" fill="#bfc1c4"/><rect x="15" y="5" width="5" height="5" fill="#ebe7ed"/><rect x="20" y="5" width="5" height="5" fill="#d0d4d4"/><rect x="25" y="5" width="5" height="5" fill="#c5c8ce"/><rect x="30" y="5" width="5" height="5" fill="#afb4b5"/><rect x="35" y="5" width="5" height="5" fill="#e1e4e5"/><rect x="40" y="5" width="5" height="5" fill="#b9b8ba"/><rect x="45" y="5" width="5" height="5" fill="#cec8c7"/><rect x="50" y="5" width="5" height="5" fill="#f1eef4"/><rect x="55" y="5" width="5" height="5" fill="#c2c2c7"/><rect x="60" y="5" width="5" height="5" fill="#cac6c0"/><rect x="65" y="5" width="5" height="5" fill="#f4eeed"/><rect x="70" y="5" width="5" height="5" fill="#d1d4cf"/><rect x="75" y="5" width="3" height="5" fill="#dee1de"/><rect x="0" y="10" width="5" height="5" fill="#c0c2c4"/><rect x="5" y="10" width="5" height="5" fill="#e6e8ed"/><rect x="10" y="10" width="5" height="5" fill="#ebe9e4"/><rect x="15" y="10" width="5" height="5" fill="#efeff5"/><rect x="20" y="10" width="5" height="5" fill="#ccc6c1"/><rect x="25" y="10" width="5" height="5" fill="#dbdfe1"/><rect x="30" y="10" width="5" height="5" fill="#e3e2de"/><rect x="35" y="10" width="5" height="5" fill="#f2eef3"/><rect x="40" y="10" width="5" height="5" fill="#d2cfd4"/><rect x="45" y="10" width="5" height="5" fill="#d0ced0"/><rect x="50" y="10" width="5" height="5" fill="#fffefa"/><rect x="55" y="10" width="5" height="5" fill="#edefed"/><rect x="60" y="10" width="5" height="5" fill="#e2e4e0"/><rect x="65" y="10" width="5" height="5" fill="#eceef1"/><rect x="70" y="10" width="5" height="5" fill="#cfcdc8"/><rect x="75" y="10" width="3" height="5" fill="#e4eaec"/></svg><svg style="position:absolute;left:346px;top:661px;overflow:visible;z-index:9;" width="78" height="10" viewBox="0 0 78 10"><rect x="0" y="0" width="5" height="5" fill="#fffdfc"/><rect x="5" y="0" width="5" height="5" fill="#dcdeda"/><rect x="10" y="0" width="5" height="5" fill="#bac0bd"/><rect x="15" y="0" width="5" height="5" fill="#c8c9ce"/><rect x="20" y="0" width="5" height="5" fill="#d4d3ce"/><rect x="25" y="0" width="5" height="5" fill="#ebf0f2"/><rect x="30" y="0" width="5" height="5" fill="#cbc6c8"/><rect x="35" y="0" width="5" height="5" fill="#a0a0a4"/><rect x="40" y="0" width="5" height="5" fill="#d3d0cc"/><rect x="45" y="0" width="5" height="5" fill="#f3efec"/><rect x="50" y="0" width="5" height="5" fill="#fffeff"/><rect x="55" y="0" width="5" height="5" fill="#eae5e9"/><rect x="60" y="0" width="5" height="5" fill="#a4a5a8"/><rect x="65" y="0" width="5" height="5" fill="#e1e4ea"/><rect x="70" y="0" width="5" height="5" fill="#9fa3a0"/><rect x="75" y="0" width="3" height="5" fill="#c8c8c3"/><rect x="0" y="5" width="5" height="5" fill="#fefcff"/><rect x="5" y="5" width="5" height="5" fill="#d8d4da"/><rect x="10" y="5" width="5" height="5" fill="#d6d2d1"/><rect x="15" y="5" width="5" height="5" fill="#e6e1e3"/><rect x="20" y="5" width="5" height="5" fill="#cccace"/><rect x="25" y="5" width="5" height="5" fill="#e8ede7"/><rect x="30" y="5" width="5" height="5" fill="#f5f8f4"/><rect x="35" y="5" width="5" height="5" fill="#c3c5c9"/><rect x="40" y="5" width="5" height="5" fill="#a8a4a5"/><rect x="45" y="5" width="5" height="5" fill="#aaaaab"/><rect x="50" y="5" width="5" height="5" fill="#fbfbf8"/><rect x="55" y="5" width="5" height="5" fill="#bec1bd"/><rect x="60" y="5" width="5" height="5" fill="#b0abaa"/><rect x="65" y="5" width="5" height="5" fill="#c0c5c7"/><rect x="70" y="5" width="5" height="5" fill="#a5aab0"/><rect x="75" y="5" width="3" height="5" fill="#edeaed"/></svg><svg style="position:absolute;left:346px;top:676px;overflow:visible;z-index:9;" width="78" height="15" viewBox="0 0 78 15"><rect x="0" y="0" width="5" height="5" fill="#e8e7e2"/><rect x="5" y="0" width="5" height="5" fill="#dcdfdd"/><rect x="10" y="0" width="5" height="5" fill="#b3b5b4"/><rect x="15" y="0" width="5" height="5" fill="#ecf0f2"/><rect x="20" y="0" width="5" height="5" fill="#fffdfa"/><rect x="25" y="0" width="5" height="5" fill="#cfccc6"/><rect x="30" y="0" width="5" height="5" fill="#c5c7c8"/><rect x="35" y="0" width="5" height="5" fill="#c7c1be"/><rect x="40" y="0" width="5" height="5" fill="#d9dedc"/><rect x="45" y="0" width="5" height="5" fill="#f1eff1"/><rect x="50" y="0" width="5" height="5" fill="#b3b0ab"/><rect x="55" y="0" width="5" height="5" fill="#e2e0e3"/><rect x="60" y="0" width="5" height="5" fill="#c1c1bd"/><rect x="65" y="0" width="5" height="5" fill="#e4e3e5"/><rect x="70" y="0" width="5" height="5" fill="#a1a1a2"/><rect x="75" y="0" width="3" height="5" fill="#d0d0d3"/><rect x="0" y="5" width="5" height="5" fill="#aeb0b1"/><rect x="5" y="5" width="5" height="5" fill="#ebe7ec"/><rect x="10" y="5" width="5" height="5" fill="#9aa0a6"/><rect x="15" y="5" width="5" height="5" fill="#b0b4b4"/><rect x="20" y="5" width="5" height="5" fill="#a6acab"/><rect x="25" y="5" width="5" height="5" fill="#c4c1c6"/><rect x="30" y="5" width="5" height="5" fill="#c8c2bf"/><rect x="35" y="5" width="5" height="5" fill="#cdcfd5"/><rect x="40" y="5" width="5" height="5" fill="#beb9ba"/><rect x="45" y="5" width="5" height="5" fill="#d8d3ce"/><rect x="50" y="5" width="5" height="5" fill="#f8fdfa"/><rect x="55" y="5" width="5" height="5" fill="#bfc4c3"/><rect x="60" y="5" width="5" height="5" fill="#cecdd0"/><rect x="65" y="5" width="5" height="5" fill="#fffbff"/><rect x="70" y="5" width="5" height="5" fill="#a2a4a9"/><rect x="75" y="5" width="3" height="5" fill="#f9f7f5"/><rect x="0" y="10" width="5" height="5" fill="#b2b3b1"/><rect x="5" y="10" width="5" height="5" fill="#ffffff"/><rect x="10" y="10" width="5" height="5" fill="#e2e5e2"/><rect x="15" y="10" width="5" height="5" fill="#e8e4de"/><rect x="20" y="10" width="5" height="5" fill="#9ea09e"/><rect x="25" y="10" width="5" height="5" fill="#cdd3ce"/><rect x="30" y="10" width="5" height="5" fill="#e6e0db"/><rect x="35" y="10" width="5" height="5" fill="#c7c5c2"/><rect x="40" y="10" width="5" height="5" fill="#eae9ea"/><rect x="45" y="10" width="5" height="5" fill="#c9cacb"/><rect x="50" y="10" width="5" height="5" fill="#a8a29d"/><rect x="55" y="10" width="5" height="5" fill="#e5e4e4"/><rect x="60" y="10" width="5" height="5" fill="#d2ccc8"/><rect x="65" y="10" width="5" height="5" fill="#e6e8ea"/><rect x="70" y="10" width="5" height="5" fill="#a5a5a9"/><rect x="75" y="10" width="3" height="5" fill="#c4c3c2"/></svg><svg style="position:absolute;left:440px;top:639px;overflow:visible;z-index:9;" width="98" height="15" viewBox="0 0 98 15"><rect x="0" y="0" width="5" height="5" fill="#b5b2b6"/><rect x="5" y="0" width="5" height="5" fill="#d0ced4"/><rect x="10" y="0" width="5" height="5" fill="#cdcecb"/><rect x="15" y="0" width="5" height="5" fill="#ebeee9"/><rect x="20" y="0" width="5" height="5" fill="#e3e9e8"/><rect x="25" y="0" width="5" height="5" fill="#f0f0f6"/><rect x="30" y="0" width="5" height="5" fill="#fffbfb"/><rect x="35" y="0" width="5" height="5" fill="#d5d2ce"/><rect x="40" y="0" width="5" height="5" fill="#ede7e1"/><rect x="45" y="0" width="5" height="5" fill="#cdd1d4"/><rect x="50" y="0" width="5" height="5" fill="#dad4d4"/><rect x="55" y="0" width="5" height="5" fill="#fffafc"/><rect x="60" y="0" width="5" height="5" fill="#cdc8c3"/><rect x="65" y="0" width="5" height="5" fill="#dae0e4"/><rect x="70" y="0" width="5" height="5" fill="#a8a3a7"/><rect x="75" y="0" width="5" height="5" fill="#c8c7cd"/><rect x="80" y="0" width="5" height="5" fill="#d0cacb"/><rect x="85" y="0" width="5" height="5" fill="#eee8e7"/><rect x="90" y="0" width="5" height="5" fill="#d0cfd1"/><rect x="95" y="0" width="3" height="5" fill="#c7c2c5"/><rect x="0" y="5" width="5" height="5" fill="#b3adb1"/><rect x="5" y="5" width="5" height="5" fill="#c6c0c0"/><rect x="10" y="5" width="5" height="5" fill="#d0ced2"/><rect x="15" y="5" width="5" height="5" fill="#e1e1e1"/><rect x="20" y="5" width="5" height="5" fill="#c9c5c5"/><rect x="25" y="5" width="5" height="5" fill="#ccccce"/><rect x="30" y="5" width="5" height="5" fill="#adafb4"/><rect x="35" y="5" width="5" height="5" fill="#bfc5cb"/><rect x="40" y="5" width="5" height="5" fill="#b3b2b8"/><rect x="45" y="5" width="5" height="5" fill="#a2a6a5"/><rect x="50" y="5" width="5" height="5" fill="#d8d3d4"/><rect x="55" y="5" width="5" height="5" fill="#c3c5c5"/><rect x="60" y="5" width="5" height="5" fill="#f0efed"/><rect x="65" y="5" width="5" height="5" fill="#cecacc"/><rect x="70" y="5" width="5" height="5" fill="#a3a29f"/><rect x="75" y="5" width="5" height="5" fill="#c2c6cc"/><rect x="80" y="5" width="5" height="5" fill="#d6d0d2"/><rect x="85" y="5" width="5" height="5" fill="#e3dfdc"/><rect x="90" y="5" width="5" height="5" fill="#cecfd0"/><rect x="95" y="5" width="3" height="5" fill="#d0cdc9"/><rect x="0" y="10" width="5" height="5" fill="#b7b8b4"/><rect x="5" y="10" width="5" height="5" fill="#fcf8fd"/><rect x="10" y="10" width="5" height="5" fill="#cac8ca"/><rect x="15" y="10" width="5" height="5" fill="#f2f8f5"/><rect x="20" y="10" width="5" height="5" fill="#dee2dd"/><rect x="25" y="10" width="5" height="5" fill="#e9eeef"/><rect x="30" y="10" width="5" height="5" fill="#e5e0e3"/><rect x="35" y="10" width="5" height="5" fill="#ced0ca"/><rect x="40" y="10" width="5" height="5" fill="#aaadb1"/><rect x="45" y="10" width="5" height="5" fill="#dee4e6"/><rect x="50" y="10" width="5" height="5" fill="#abafad"/><rect x="55" y="10" width="5" height="5" fill="#e5eaec"/><rect x="60" y="10" width="5" height="5" fill="#f0ecf1"/><rect x="65" y="10" width="5" height="5" fill="#bfc4c8"/><rect x="70" y="10" width="5" height="5" fill="#b3aeb4"/><rect x="75" y="10" width="5" height="5" fill="#d5d4ce"/><rect x="80" y="10" width="5" height="5" fill="#cccfcd"/><rect x="85" y="10" width="5" height="5" fill="#f2ece6"/><rect x="90" y="10" width="5" height="5" fill="#c9c6c2"/><rect x="95" y="10" width="3" height="5" fill="#f4efed"/></svg><svg style="position:absolute;left:440px;top:659px;overflow:visible;z-index:9;" width="98" height="15" viewBox="0 0 98 15"><rect x="0" y="0" width="5" height="5" fill="#f2f7f4"/><rect x="5" y="0" width="5" height="5" fill="#cdcdd3"/><rect x="10" y="0" width="5" height="5" fill="#eaeef2"/><rect x="15" y="0" width="5" height="5" fill="#cdcccb"/><rect x="20" y="0" width="5" height="5" fill="#adb3b8"/><rect x="25" y="0" width="5" height="5" fill="#eee8ee"/><rect x="30" y="0" width="5" height="5" fill="#f8fefc"/><rect x="35" y="0" width="5" height="5" fill="#e6e8ec"/><rect x="40" y="0" width="5" height="5" fill="#b1b1ae"/><rect x="45" y="0" width="5" height="5" fill="#e2e7ea"/><rect x="50" y="0" width="5" height="5" fill="#ece6e8"/><rect x="55" y="0" width="5" height="5" fill="#ecefee"/><rect x="60" y="0" width="5" height="5" fill="#ccd0d3"/><rect x="65" y="0" width="5" height="5" fill="#d5d0d5"/><rect x="70" y="0" width="5" height="5" fill="#e7e4de"/><rect x="75" y="0" width="5" height="5" fill="#ccc6c1"/><rect x="80" y="0" width="5" height="5" fill="#f0f0f5"/><rect x="85" y="0" width="5" height="5" fill="#c1c2c0"/><rect x="90" y="0" width="5" height="5" fill="#a4a3a8"/><rect x="95" y="0" width="3" height="5" fill="#fffeff"/><rect x="0" y="5" width="5" height="5" fill="#cdcac6"/><rect x="5" y="5" width="5" height="5" fill="#ada9a8"/><rect x="10" y="5" width="5" height="5" fill="#e6e3e5"/><rect x="15" y="5" width="5" height="5" fill="#c8cece"/><rect x="20" y="5" width="5" height="5" fill="#cfc9cd"/><rect x="25" y="5" width="5" height="5" fill="#f4f0f6"/><rect x="30" y="5" width="5" height="5" fill="#a2a5a5"/><rect x="35" y="5" width="5" height="5" fill="#c7cccf"/><rect x="40" y="5" width="5" height="5" fill="#acaaa6"/><rect x="45" y="5" width="5" height="5" fill="#c6c1c5"/><rect x="50" y="5" width="5" height="5" fill="#d2cfca"/><rect x="55" y="5" width="5" height="5" fill="#d8d3d6"/><rect x="60" y="5" width="5" height="5" fill="#cac9ca"/><rect x="65" y="5" width="5" height="5" fill="#cdcdc8"/><rect x="70" y="5" width="5" height="5" fill="#edeef0"/><rect x="75" y="5" width="5" height="5" fill="#c7cdcc"/><rect x="80" y="5" width="5" height="5" fill="#d3d3d8"/><rect x="85" y="5" width="5" height="5" fill="#d0cad0"/><rect x="90" y="5" width="5" height="5" fill="#adb2af"/><rect x="95" y="5" width="3" height="5" fill="#fbf9f9"/><rect x="0" y="10" width="5" height="5" fill="#fffdf8"/><rect x="5" y="10" width="5" height="5" fill="#e7e5e3"/><rect x="10" y="10" width="5" height="5" fill="#c2c7cc"/><rect x="15" y="10" width="5" height="5" fill="#cdcbcb"/><rect x="20" y="10" width="5" height="5" fill="#a2a5a9"/><rect x="25" y="10" width="5" height="5" fill="#ebf0eb"/><rect x="30" y="10" width="5" height="5" fill="#c5c3c6"/><rect x="35" y="10" width="5" height="5" fill="#dcdedb"/><rect x="40" y="10" width="5" height="5" fill="#9fa09c"/><rect x="45" y="10" width="5" height="5" fill="#eeeeea"/><rect x="50" y="10" width="5" height="5" fill="#edf0ea"/><rect x="55" y="10" width="5" height="5" fill="#ebecea"/><rect x="60" y="10" width="5" height="5" fill="#cac4ca"/><rect x="65" y="10" width="5" height="5" fill="#c3c6c4"/><rect x="70" y="10" width="5" height="5" fill="#dcdfde"/><rect x="75" y="10" width="5" height="5" fill="#cccbc5"/><rect x="80" y="10" width="5" height="5" fill="#fbfeff"/><rect x="85" y="10" width="5" height="5" fill="#c0c6ca"/><rect x="90" y="10" width="5" height="5" fill="#f9fbfb"/><rect x="95" y="10" width="3" height="5" fill="#a3a4a9"/></svg><svg style="position:absolute;left:440px;top:679px;overflow:visible;z-index:9;" width="98" height="10" viewBox="0 0 98 10"><rect x="0" y="0" width="5" height="5" fill="#f8f7f2"/><rect x="5" y="0" width="5" height="5" fill="#e9eef0"/><rect x="10" y="0" width="5" height="5" fill="#c3c0c3"/><rect x="15" y="0" width="5" height="5" fill="#f1ebee"/><rect x="20" y="0" width="5" height="5" fill="#e1e4e0"/><rect x="25" y="0" width="5" height="5" fill="#f2f6fc"/><rect x="30" y="0" width="5" height="5" fill="#e2dfe0"/><rect x="35" y="0" width="5" height="5" fill="#f0f0ea"/><rect x="40" y="0" width="5" height="5" fill="#e7ede9"/><rect x="45" y="0" width="5" height="5" fill="#fafbff"/><rect x="50" y="0" width="5" height="5" fill="#a3a19f"/><rect x="55" y="0" width="5" height="5" fill="#f3eef0"/><rect x="60" y="0" width="5" height="5" fill="#c6c3c3"/><rect x="65" y="0" width="5" height="5" fill="#f5efed"/><rect x="70" y="0" width="5" height="5" fill="#beb9b6"/><rect x="75" y="0" width="5" height="5" fill="#fcf9fc"/><rect x="80" y="0" width="5" height="5" fill="#f3f6f9"/><rect x="85" y="0" width="5" height="5" fill="#f9f6f7"/><rect x="90" y="0" width="5" height="5" fill="#a4a5a1"/><rect x="95" y="0" width="3" height="5" fill="#f3eded"/><rect x="0" y="5" width="5" height="5" fill="#fffaf4"/><rect x="5" y="5" width="5" height="5" fill="#d6d2d4"/><rect x="10" y="5" width="5" height="5" fill="#cac7c3"/><rect x="15" y="5" width="5" height="5" fill="#fbf6f5"/><rect x="20" y="5" width="5" height="5" fill="#fffefc"/><rect x="25" y="5" width="5" height="5" fill="#cacfd3"/><rect x="30" y="5" width="5" height="5" fill="#c5c8c4"/><rect x="35" y="5" width="5" height="5" fill="#e6eceb"/><rect x="40" y="5" width="5" height="5" fill="#cbc6c0"/><rect x="45" y="5" width="5" height="5" fill="#c9c4c5"/><rect x="50" y="5" width="5" height="5" fill="#9ba19e"/><rect x="55" y="5" width="5" height="5" fill="#e0e0e2"/><rect x="60" y="5" width="5" height="5" fill="#f1f7fb"/><rect x="65" y="5" width="5" height="5" fill="#e3e5e3"/><rect x="70" y="5" width="5" height="5" fill="#cecdc8"/><rect x="75" y="5" width="5" height="5" fill="#cdcac7"/><rect x="80" y="5" width="5" height="5" fill="#fffff9"/><rect x="85" y="5" width="5" height="5" fill="#ffffff"/><rect x="90" y="5" width="5" height="5" fill="#a6a5a5"/><rect x="95" y="5" width="3" height="5" fill="#d2ccc6"/></svg><svg style="position:absolute;left:560px;top:651px;overflow:visible;z-index:9;" width="25" height="45" viewBox="0 0 25 45"><rect x="0" y="0" width="5" height="5" fill="#d4d3d9"/><rect x="5" y="0" width="5" height="5" fill="#cfced2"/><rect x="10" y="0" width="5" height="5" fill="#cccfd1"/><rect x="15" y="0" width="5" height="5" fill="#dae0e5"/><rect x="20" y="0" width="5" height="5" fill="#e0deda"/><rect x="0" y="5" width="5" height="5" fill="#d0d0d3"/><rect x="5" y="5" width="5" height="5" fill="#c4c6c1"/><rect x="10" y="5" width="5" height="5" fill="#c9c4ca"/><rect x="15" y="5" width="5" height="5" fill="#eae5e0"/><rect x="20" y="5" width="5" height="5" fill="#ebeae5"/><rect x="0" y="10" width="5" height="5" fill="#cbccca"/><rect x="5" y="10" width="5" height="5" fill="#d4d0ca"/><rect x="10" y="10" width="5" height="5" fill="#d0d3d4"/><rect x="15" y="10" width="5" height="5" fill="#d3d0cc"/><rect x="20" y="10" width="5" height="5" fill="#ebebec"/><rect x="0" y="15" width="5" height="5" fill="#c6c4c9"/><rect x="5" y="15" width="5" height="5" fill="#cfcacb"/><rect x="10" y="15" width="5" height="5" fill="#c1c4c2"/><rect x="15" y="15" width="5" height="5" fill="#ecece8"/><rect x="20" y="15" width="5" height="5" fill="#c8cbc6"/><rect x="0" y="20" width="5" height="5" fill="#dce2dc"/><rect x="5" y="20" width="5" height="5" fill="#d2cfc9"/><rect x="10" y="20" width="5" height="5" fill="#cdc9cd"/><rect x="15" y="20" width="5" height="5" fill="#d6d1d0"/><rect x="20" y="20" width="5" height="5" fill="#c8cbd1"/><rect x="0" y="25" width="5" height="5" fill="#c8c2c2"/><rect x="5" y="25" width="5" height="5" fill="#e0dfdf"/><rect x="10" y="25" width="5" height="5" fill="#cac9ce"/><rect x="15" y="25" width="5" height="5" fill="#c9cccd"/><rect x="20" y="25" width="5" height="5" fill="#cfcbd0"/><rect x="0" y="30" width="5" height="5" fill="#cacad0"/><rect x="5" y="30" width="5" height="5" fill="#fffafc"/><rect x="10" y="30" width="5" height="5" fill="#c0c0bb"/><rect x="15" y="30" width="5" height="5" fill="#e0e0de"/><rect x="20" y="30" width="5" height="5" fill="#eef0f1"/><rect x="0" y="35" width="5" height="5" fill="#c3c8c2"/><rect x="5" y="35" width="5" height="5" fill="#ece9e7"/><rect x="10" y="35" width="5" height="5" fill="#fcf8f9"/><rect x="15" y="35" width="5" height="5" fill="#e7e8e2"/><rect x="20" y="35" width="5" height="5" fill="#ccc6c1"/><rect x="0" y="40" width="5" height="5" fill="#d5d3d3"/><rect x="5" y="40" width="5" height="5" fill="#c0c2bd"/><rect x="10" y="40" width="5" height="5" fill="#cecece"/><rect x="15" y="40" width="5" height="5" fill="#ced0ce"/><rect x="20" y="40" width="5" height="5" fill="#c9cfcb"/></svg><svg style="position:absolute;left:560px;top:642px;overflow:visible;z-index:9;" width="25" height="10" viewBox="0 0 25 10"><rect x="0" y="0" width="5" height="5" fill="#e4eae7"/><rect x="5" y="0" width="5" height="5" fill="#eaeff2"/><rect x="10" y="0" width="5" height="5" fill="#bcb6b5"/><rect x="15" y="0" width="5" height="5" fill="#bfc0c6"/><rect x="20" y="0" width="5" height="5" fill="#d0ccc8"/><rect x="0" y="5" width="5" height="5" fill="#e2e3e6"/><rect x="5" y="5" width="5" height="5" fill="#e6e7e7"/><rect x="10" y="5" width="5" height="5" fill="#fdf9f6"/><rect x="15" y="5" width="5" height="5" fill="#f3eeea"/><rect x="20" y="5" width="5" height="5" fill="#bdc2c7"/></svg><svg style="position:absolute;left:588px;top:642px;overflow:visible;z-index:9;" width="36" height="15" viewBox="0 0 36 15"><rect x="0" y="0" width="5" height="5" fill="#ceccd1"/><rect x="5" y="0" width="5" height="5" fill="#e8eaef"/><rect x="10" y="0" width="5" height="5" fill="#d0cbcf"/><rect x="15" y="0" width="5" height="5" fill="#eee8e5"/><rect x="20" y="0" width="5" height="5" fill="#a7a4a4"/><rect x="25" y="0" width="5" height="5" fill="#e5e2e7"/><rect x="30" y="0" width="5" height="5" fill="#c1c5c2"/><rect x="35" y="0" width="1" height="5" fill="#e4e7eb"/><rect x="0" y="5" width="5" height="5" fill="#b2afb4"/><rect x="5" y="5" width="5" height="5" fill="#e0e2e7"/><rect x="10" y="5" width="5" height="5" fill="#eaeaee"/><rect x="15" y="5" width="5" height="5" fill="#bdc3c0"/><rect x="20" y="5" width="5" height="5" fill="#abaca6"/><rect x="25" y="5" width="5" height="5" fill="#e2e3de"/><rect x="30" y="5" width="5" height="5" fill="#d2d4d1"/><rect x="35" y="5" width="1" height="5" fill="#e5e2e2"/><rect x="0" y="10" width="5" height="5" fill="#c8c6c4"/><rect x="5" y="10" width="5" height="5" fill="#e3e2de"/><rect x="10" y="10" width="5" height="5" fill="#cfd1d2"/><rect x="15" y="10" width="5" height="5" fill="#e1e2dc"/><rect x="20" y="10" width="5" height="5" fill="#f6f8fc"/><rect x="25" y="10" width="5" height="5" fill="#e5e8e3"/><rect x="30" y="10" width="5" height="5" fill="#cdcbc9"/><rect x="35" y="10" width="1" height="5" fill="#dde2dc"/></svg><svg style="position:absolute;left:588px;top:662px;overflow:visible;z-index:9;" width="36" height="15" viewBox="0 0 36 15"><rect x="0" y="0" width="5" height="5" fill="#fbfcff"/><rect x="5" y="0" width="5" height="5" fill="#e9efec"/><rect x="10" y="0" width="5" height="5" fill="#b8b5b3"/><rect x="15" y="0" width="5" height="5" fill="#ebe5e6"/><rect x="20" y="0" width="5" height="5" fill="#bdc1bb"/><rect x="25" y="0" width="5" height="5" fill="#f9feff"/><rect x="30" y="0" width="5" height="5" fill="#e4dee0"/><rect x="35" y="0" width="1" height="5" fill="#fffef8"/><rect x="0" y="5" width="5" height="5" fill="#f6f7f1"/><rect x="5" y="5" width="5" height="5" fill="#cdc7cc"/><rect x="10" y="5" width="5" height="5" fill="#afa9ab"/><rect x="15" y="5" width="5" height="5" fill="#c4c3c3"/><rect x="20" y="5" width="5" height="5" fill="#cbcdd0"/><rect x="25" y="5" width="5" height="5" fill="#c6c7c7"/><rect x="30" y="5" width="5" height="5" fill="#b4b0ae"/><rect x="35" y="5" width="1" height="5" fill="#fffbff"/><rect x="0" y="10" width="5" height="5" fill="#f8faf5"/><rect x="5" y="10" width="5" height="5" fill="#ebe8e3"/><rect x="10" y="10" width="5" height="5" fill="#c2c5bf"/><rect x="15" y="10" width="5" height="5" fill="#cfd1d5"/><rect x="20" y="10" width="5" height="5" fill="#dde1dd"/><rect x="25" y="10" width="5" height="5" fill="#f8f8f2"/><rect x="30" y="10" width="5" height="5" fill="#f6f6f1"/><rect x="35" y="10" width="1" height="5" fill="#fffefb"/></svg><svg style="position:absolute;left:588px;top:677px;overflow:visible;z-index:9;" width="36" height="15" viewBox="0 0 36 15"><rect x="0" y="0" width="5" height="5" fill="#bdb8b4"/><rect x="5" y="0" width="5" height="5" fill="#c6c2c2"/><rect x="10" y="0" width="5" height="5" fill="#a6aab0"/><rect x="15" y="0" width="5" height="5" fill="#dadee3"/><rect x="20" y="0" width="5" height="5" fill="#d0ccc6"/><rect x="25" y="0" width="5" height="5" fill="#fcfbff"/><rect x="30" y="0" width="5" height="5" fill="#d3d0cb"/><rect x="35" y="0" width="1" height="5" fill="#fdfdff"/><rect x="0" y="5" width="5" height="5" fill="#aeaca9"/><rect x="5" y="5" width="5" height="5" fill="#d4d1cb"/><rect x="10" y="5" width="5" height="5" fill="#a3a1a5"/><rect x="15" y="5" width="5" height="5" fill="#c4c1bb"/><rect x="20" y="5" width="5" height="5" fill="#c6c4c5"/><rect x="25" y="5" width="5" height="5" fill="#d2d3d0"/><rect x="30" y="5" width="5" height="5" fill="#d1d1cb"/><rect x="35" y="5" width="1" height="5" fill="#fef8f9"/><rect x="0" y="10" width="5" height="5" fill="#dad4d0"/><rect x="5" y="10" width="5" height="5" fill="#c5c3c1"/><rect x="10" y="10" width="5" height="5" fill="#9ea29c"/><rect x="15" y="10" width="5" height="5" fill="#e8e6ec"/><rect x="20" y="10" width="5" height="5" fill="#c8c6c0"/><rect x="25" y="10" width="5" height="5" fill="#e5e4e2"/><rect x="30" y="10" width="5" height="5" fill="#c2c7c2"/><rect x="35" y="10" width="1" height="5" fill="#fafdf8"/></svg><svg style="position:absolute;left:686px;top:642px;overflow:visible;z-index:9;" width="42" height="15" viewBox="0 0 42 15"><rect x="0" y="0" width="5" height="5" fill="#e3e5e0"/><rect x="5" y="0" width="5" height="5" fill="#e4eaee"/><rect x="10" y="0" width="5" height="5" fill="#e8ede8"/><rect x="15" y="0" width="5" height="5" fill="#e6e4e8"/><rect x="20" y="0" width="5" height="5" fill="#e6e4e8"/><rect x="25" y="0" width="5" height="5" fill="#e4eae9"/><rect x="30" y="0" width="5" height="5" fill="#b2b4b8"/><rect x="35" y="0" width="5" height="5" fill="#e0e4ea"/><rect x="40" y="0" width="2" height="5" fill="#fffff9"/><rect x="0" y="5" width="5" height="5" fill="#a7a8ab"/><rect x="5" y="5" width="5" height="5" fill="#bbc0c5"/><rect x="10" y="5" width="5" height="5" fill="#e8ebe7"/><rect x="15" y="5" width="5" height="5" fill="#d3d3d1"/><rect x="20" y="5" width="5" height="5" fill="#e0e1e3"/><rect x="25" y="5" width="5" height="5" fill="#cdd2d0"/><rect x="30" y="5" width="5" height="5" fill="#e4e0e4"/><rect x="35" y="5" width="5" height="5" fill="#e7eaef"/><rect x="40" y="5" width="2" height="5" fill="#a8a7ab"/><rect x="0" y="10" width="5" height="5" fill="#e6e8eb"/><rect x="5" y="10" width="5" height="5" fill="#e4e6ea"/><rect x="10" y="10" width="5" height="5" fill="#dfe5e5"/><rect x="15" y="10" width="5" height="5" fill="#eef0f0"/><rect x="20" y="10" width="5" height="5" fill="#e3e8ee"/><rect x="25" y="10" width="5" height="5" fill="#f3efea"/><rect x="30" y="10" width="5" height="5" fill="#a1a6ac"/><rect x="35" y="10" width="5" height="5" fill="#e3e9ee"/><rect x="40" y="10" width="2" height="5" fill="#b5b6b0"/></svg><svg style="position:absolute;left:686px;top:661px;overflow:visible;z-index:9;" width="42" height="10" viewBox="0 0 42 10"><rect x="0" y="0" width="5" height="5" fill="#e8ebef"/><rect x="5" y="0" width="5" height="5" fill="#bdc3be"/><rect x="10" y="0" width="5" height="5" fill="#b4b4ba"/><rect x="15" y="0" width="5" height="5" fill="#c8c6c9"/><rect x="20" y="0" width="5" height="5" fill="#e4e2e2"/><rect x="25" y="0" width="5" height="5" fill="#bcc0c4"/><rect x="30" y="0" width="5" height="5" fill="#ccc8ce"/><rect x="35" y="0" width="5" height="5" fill="#b5afaa"/><rect x="40" y="0" width="2" height="5" fill="#9ea4a3"/><rect x="0" y="5" width="5" height="5" fill="#bbc0bf"/><rect x="5" y="5" width="5" height="5" fill="#d3d1cc"/><rect x="10" y="5" width="5" height="5" fill="#a1a3a5"/><rect x="15" y="5" width="5" height="5" fill="#c5c2bf"/><rect x="20" y="5" width="5" height="5" fill="#b2b0ae"/><rect x="25" y="5" width="5" height="5" fill="#cac7c7"/><rect x="30" y="5" width="5" height="5" fill="#c9c6c7"/><rect x="35" y="5" width="5" height="5" fill="#aaaea9"/><rect x="40" y="5" width="2" height="5" fill="#acb0ac"/></svg><svg style="position:absolute;left:686px;top:677px;overflow:visible;z-index:9;" width="42" height="15" viewBox="0 0 42 15"><rect x="0" y="0" width="5" height="5" fill="#f8fcfa"/><rect x="5" y="0" width="5" height="5" fill="#deded9"/><rect x="10" y="0" width="5" height="5" fill="#d5d1d7"/><rect x="15" y="0" width="5" height="5" fill="#dfdfdf"/><rect x="20" y="0" width="5" height="5" fill="#cac8c3"/><rect x="25" y="0" width="5" height="5" fill="#eaebec"/><rect x="30" y="0" width="5" height="5" fill="#fbf8fa"/><rect x="35" y="0" width="5" height="5" fill="#a3a3a7"/><rect x="40" y="0" width="2" height="5" fill="#fdfffc"/><rect x="0" y="5" width="5" height="5" fill="#fffcfd"/><rect x="5" y="5" width="5" height="5" fill="#e9e8e3"/><rect x="10" y="5" width="5" height="5" fill="#a7a5a5"/><rect x="15" y="5" width="5" height="5" fill="#cbc7c2"/><rect x="20" y="5" width="5" height="5" fill="#cccbc8"/><rect x="25" y="5" width="5" height="5" fill="#dddede"/><rect x="30" y="5" width="5" height="5" fill="#bdc3c8"/><rect x="35" y="5" width="5" height="5" fill="#a6a7aa"/><rect x="40" y="5" width="2" height="5" fill="#a6a9ac"/><rect x="0" y="10" width="5" height="5" fill="#f5f6f2"/><rect x="5" y="10" width="5" height="5" fill="#f4eef4"/><rect x="10" y="10" width="5" height="5" fill="#bfc2c0"/><rect x="15" y="10" width="5" height="5" fill="#efebea"/><rect x="20" y="10" width="5" height="5" fill="#eae7eb"/><rect x="25" y="10" width="5" height="5" fill="#e3e5e4"/><rect x="30" y="10" width="5" height="5" fill="#cac4c2"/><rect x="35" y="10" width="5" height="5" fill="#a7a1a2"/><rect x="40" y="10" width="2" height="5" fill="#f9f7f3"/></svg><svg style="position:absolute;left:774px;top:642px;overflow:visible;z-index:9;" width="64" height="15" viewBox="0 0 64 15"><rect x="0" y="0" width="5" height="5" fill="#fffdff"/><rect x="5" y="0" width="5" height="5" fill="#f1ebe6"/><rect x="10" y="0" width="5" height="5" fill="#bcb7b2"/><rect x="15" y="0" width="5" height="5" fill="#fffbfd"/><rect x="20" y="0" width="5" height="5" fill="#e1e1df"/><rect x="25" y="0" width="5" height="5" fill="#eaefec"/><rect x="30" y="0" width="5" height="5" fill="#ebefea"/><rect x="35" y="0" width="5" height="5" fill="#edede7"/><rect x="40" y="0" width="5" height="5" fill="#c9ccd0"/><rect x="45" y="0" width="5" height="5" fill="#eeeded"/><rect x="50" y="0" width="5" height="5" fill="#fefcff"/><rect x="55" y="0" width="5" height="5" fill="#fffefa"/><rect x="60" y="0" width="4" height="5" fill="#a7aaa4"/><rect x="0" y="5" width="5" height="5" fill="#fcf8f7"/><rect x="5" y="5" width="5" height="5" fill="#ebeaed"/><rect x="10" y="5" width="5" height="5" fill="#adaeb4"/><rect x="15" y="5" width="5" height="5" fill="#fffdfd"/><rect x="20" y="5" width="5" height="5" fill="#e9e5e3"/><rect x="25" y="5" width="5" height="5" fill="#bfc1bc"/><rect x="30" y="5" width="5" height="5" fill="#a8a8a5"/><rect x="35" y="5" width="5" height="5" fill="#ced3d5"/><rect x="40" y="5" width="5" height="5" fill="#fffefe"/><rect x="45" y="5" width="5" height="5" fill="#ced3d7"/><rect x="50" y="5" width="5" height="5" fill="#f2f8fd"/><rect x="55" y="5" width="5" height="5" fill="#faf8f9"/><rect x="60" y="5" width="4" height="5" fill="#a5a4aa"/><rect x="0" y="10" width="5" height="5" fill="#f5faf7"/><rect x="5" y="10" width="5" height="5" fill="#e1e4e6"/><rect x="10" y="10" width="5" height="5" fill="#a6aba7"/><rect x="15" y="10" width="5" height="5" fill="#fbfffe"/><rect x="20" y="10" width="5" height="5" fill="#e4e9ef"/><rect x="25" y="10" width="5" height="5" fill="#eae7ec"/><rect x="30" y="10" width="5" height="5" fill="#a0a3a2"/><rect x="35" y="10" width="5" height="5" fill="#fefaf8"/><rect x="40" y="10" width="5" height="5" fill="#f6f8f9"/><rect x="45" y="10" width="5" height="5" fill="#cfc9c7"/><rect x="50" y="10" width="5" height="5" fill="#f8f8f4"/><rect x="55" y="10" width="5" height="5" fill="#fafeff"/><rect x="60" y="10" width="4" height="5" fill="#faf8fe"/></svg><svg style="position:absolute;left:774px;top:661px;overflow:visible;z-index:9;" width="64" height="10" viewBox="0 0 64 10"><rect x="0" y="0" width="5" height="5" fill="#f5f0ef"/><rect x="5" y="0" width="5" height="5" fill="#f9f7f2"/><rect x="10" y="0" width="5" height="5" fill="#dee0da"/><rect x="15" y="0" width="5" height="5" fill="#f4f7f6"/><rect x="20" y="0" width="5" height="5" fill="#9ea4a8"/><rect x="25" y="0" width="5" height="5" fill="#f2f8f8"/><rect x="30" y="0" width="5" height="5" fill="#d2d0cb"/><rect x="35" y="0" width="5" height="5" fill="#dee3e5"/><rect x="40" y="0" width="5" height="5" fill="#b4b3b0"/><rect x="45" y="0" width="5" height="5" fill="#e1e1dd"/><rect x="50" y="0" width="5" height="5" fill="#c7c2c3"/><rect x="55" y="0" width="5" height="5" fill="#f3f7f5"/><rect x="60" y="0" width="4" height="5" fill="#c4c8ca"/><rect x="0" y="5" width="5" height="5" fill="#f1ebe5"/><rect x="5" y="5" width="5" height="5" fill="#ffffff"/><rect x="10" y="5" width="5" height="5" fill="#dee3e9"/><rect x="15" y="5" width="5" height="5" fill="#dadfda"/><rect x="20" y="5" width="5" height="5" fill="#deded8"/><rect x="25" y="5" width="5" height="5" fill="#d5d3d6"/><rect x="30" y="5" width="5" height="5" fill="#bcc2c1"/><rect x="35" y="5" width="5" height="5" fill="#c9cccc"/><rect x="40" y="5" width="5" height="5" fill="#a6a7a7"/><rect x="45" y="5" width="5" height="5" fill="#c2c8cb"/><rect x="50" y="5" width="5" height="5" fill="#cccace"/><rect x="55" y="5" width="5" height="5" fill="#e7ebe8"/><rect x="60" y="5" width="4" height="5" fill="#cdc7c6"/></svg><svg style="position:absolute;left:774px;top:677px;overflow:visible;z-index:9;" width="64" height="15" viewBox="0 0 64 15"><rect x="0" y="0" width="5" height="5" fill="#c6c2c8"/><rect x="5" y="0" width="5" height="5" fill="#e9ece6"/><rect x="10" y="0" width="5" height="5" fill="#e1e2e6"/><rect x="15" y="0" width="5" height="5" fill="#e0e0dc"/><rect x="20" y="0" width="5" height="5" fill="#c6c7cd"/><rect x="25" y="0" width="5" height="5" fill="#f2eff4"/><rect x="30" y="0" width="5" height="5" fill="#c2c1bb"/><rect x="35" y="0" width="5" height="5" fill="#e0e0dc"/><rect x="40" y="0" width="5" height="5" fill="#c6c5c2"/><rect x="45" y="0" width="5" height="5" fill="#e4e8e4"/><rect x="50" y="0" width="5" height="5" fill="#f5fbf8"/><rect x="55" y="0" width="5" height="5" fill="#fef9fd"/><rect x="60" y="0" width="4" height="5" fill="#b0aba6"/><rect x="0" y="5" width="5" height="5" fill="#9fa4a0"/><rect x="5" y="5" width="5" height="5" fill="#dfe1e0"/><rect x="10" y="5" width="5" height="5" fill="#aaa8aa"/><rect x="15" y="5" width="5" height="5" fill="#eceee9"/><rect x="20" y="5" width="5" height="5" fill="#bbc0be"/><rect x="25" y="5" width="5" height="5" fill="#eaeeea"/><rect x="30" y="5" width="5" height="5" fill="#b7b4af"/><rect x="35" y="5" width="5" height="5" fill="#fefbfc"/><rect x="40" y="5" width="5" height="5" fill="#a2a6a7"/><rect x="45" y="5" width="5" height="5" fill="#d2d2d4"/><rect x="50" y="5" width="5" height="5" fill="#bdc1c1"/><rect x="55" y="5" width="5" height="5" fill="#bac0bd"/><rect x="60" y="5" width="4" height="5" fill="#b2afb3"/><rect x="0" y="10" width="5" height="5" fill="#c4c5bf"/><rect x="5" y="10" width="5" height="5" fill="#c8cacd"/><rect x="10" y="10" width="5" height="5" fill="#ebedf0"/><rect x="15" y="10" width="5" height="5" fill="#e2e3df"/><rect x="20" y="10" width="5" height="5" fill="#d5d2d2"/><rect x="25" y="10" width="5" height="5" fill="#f1f0ee"/><rect x="30" y="10" width="5" height="5" fill="#acafb3"/><rect x="35" y="10" width="5" height="5" fill="#e4e3e5"/><rect x="40" y="10" width="5" height="5" fill="#afa9a5"/><rect x="45" y="10" width="5" height="5" fill="#e5e8ea"/><rect x="50" y="10" width="5" height="5" fill="#e8e3e2"/><rect x="55" y="10" width="5" height="5" fill="#d8d4ce"/><rect x="60" y="10" width="4" height="5" fill="#acb1b2"/></svg><svg style="position:absolute;left:844px;top:642px;overflow:visible;z-index:9;" width="114" height="15" viewBox="0 0 114 15"><rect x="0" y="0" width="5" height="5" fill="#c3c3c2"/><rect x="5" y="0" width="5" height="5" fill="#e1e0e1"/><rect x="10" y="0" width="5" height="5" fill="#f0eeed"/><rect x="15" y="0" width="5" height="5" fill="#e9e4e5"/><rect x="20" y="0" width="5" height="5" fill="#c8c4c1"/><rect x="25" y="0" width="5" height="5" fill="#ece6e4"/><rect x="30" y="0" width="5" height="5" fill="#c0c5c6"/><rect x="35" y="0" width="5" height="5" fill="#dfe5eb"/><rect x="40" y="0" width="5" height="5" fill="#fcfbff"/><rect x="45" y="0" width="5" height="5" fill="#b5b5b9"/><rect x="50" y="0" width="5" height="5" fill="#b1b5b0"/><rect x="55" y="0" width="5" height="5" fill="#e8eae8"/><rect x="60" y="0" width="5" height="5" fill="#fffafd"/><rect x="65" y="0" width="5" height="5" fill="#c1c1c1"/><rect x="70" y="0" width="5" height="5" fill="#bfb9b3"/><rect x="75" y="0" width="5" height="5" fill="#f1edee"/><rect x="80" y="0" width="5" height="5" fill="#f5fbf5"/><rect x="85" y="0" width="5" height="5" fill="#f3edea"/><rect x="90" y="0" width="5" height="5" fill="#fcf7f3"/><rect x="95" y="0" width="5" height="5" fill="#e9e8e6"/><rect x="100" y="0" width="5" height="5" fill="#c4c0be"/><rect x="105" y="0" width="5" height="5" fill="#a2a3a2"/><rect x="110" y="0" width="4" height="5" fill="#9ea0a2"/><rect x="0" y="5" width="5" height="5" fill="#d1d3d4"/><rect x="5" y="5" width="5" height="5" fill="#c5c8ca"/><rect x="10" y="5" width="5" height="5" fill="#bcc2bd"/><rect x="15" y="5" width="5" height="5" fill="#f3edf2"/><rect x="20" y="5" width="5" height="5" fill="#c6c9cc"/><rect x="25" y="5" width="5" height="5" fill="#c7cccb"/><rect x="30" y="5" width="5" height="5" fill="#d6d4d4"/><rect x="35" y="5" width="5" height="5" fill="#cacfca"/><rect x="40" y="5" width="5" height="5" fill="#d3cfcf"/><rect x="45" y="5" width="5" height="5" fill="#b7b1b5"/><rect x="50" y="5" width="5" height="5" fill="#aeb0b3"/><rect x="55" y="5" width="5" height="5" fill="#e9eeeb"/><rect x="60" y="5" width="5" height="5" fill="#afb3af"/><rect x="65" y="5" width="5" height="5" fill="#cec8cd"/><rect x="70" y="5" width="5" height="5" fill="#a8aab0"/><rect x="75" y="5" width="5" height="5" fill="#c2c1bb"/><rect x="80" y="5" width="5" height="5" fill="#a4a3a0"/><rect x="85" y="5" width="5" height="5" fill="#e1dfda"/><rect x="90" y="5" width="5" height="5" fill="#fffffb"/><rect x="95" y="5" width="5" height="5" fill="#c7c7cb"/><rect x="100" y="5" width="5" height="5" fill="#f1f6fb"/><rect x="105" y="5" width="5" height="5" fill="#a1a7aa"/><rect x="110" y="5" width="4" height="5" fill="#a0a09b"/><rect x="0" y="10" width="5" height="5" fill="#d1cec9"/><rect x="5" y="10" width="5" height="5" fill="#d2cfce"/><rect x="10" y="10" width="5" height="5" fill="#cfd4d3"/><rect x="15" y="10" width="5" height="5" fill="#eae5e7"/><rect x="20" y="10" width="5" height="5" fill="#c9ccca"/><rect x="25" y="10" width="5" height="5" fill="#c9c8c5"/><rect x="30" y="10" width="5" height="5" fill="#cacdce"/><rect x="35" y="10" width="5" height="5" fill="#e7e4de"/><rect x="40" y="10" width="5" height="5" fill="#ccc9cf"/><rect x="45" y="10" width="5" height="5" fill="#fffdff"/><rect x="50" y="10" width="5" height="5" fill="#b0acae"/><rect x="55" y="10" width="5" height="5" fill="#eeeae5"/><rect x="60" y="10" width="5" height="5" fill="#a6a9ae"/><rect x="65" y="10" width="5" height="5" fill="#d7d3d7"/><rect x="70" y="10" width="5" height="5" fill="#aaa6a4"/><rect x="75" y="10" width="5" height="5" fill="#d4d1d6"/><rect x="80" y="10" width="5" height="5" fill="#b6b6b0"/><rect x="85" y="10" width="5" height="5" fill="#efe9e9"/><rect x="90" y="10" width="5" height="5" fill="#f9fcfc"/><rect x="95" y="10" width="5" height="5" fill="#c7cdce"/><rect x="100" y="10" width="5" height="5" fill="#cac6c6"/><rect x="105" y="10" width="5" height="5" fill="#fffbfa"/><rect x="110" y="10" width="4" height="5" fill="#a6a8ad"/></svg><svg style="position:absolute;left:844px;top:661px;overflow:visible;z-index:9;" width="114" height="10" viewBox="0 0 114 10"><rect x="0" y="0" width="5" height="5" fill="#d1cec8"/><rect x="5" y="0" width="5" height="5" fill="#e9e9ef"/><rect x="10" y="0" width="5" height="5" fill="#cbc9ce"/><rect x="15" y="0" width="5" height="5" fill="#e4e4e9"/><rect x="20" y="0" width="5" height="5" fill="#f2f0f2"/><rect x="25" y="0" width="5" height="5" fill="#eeeaea"/><rect x="30" y="0" width="5" height="5" fill="#e2e5e1"/><rect x="35" y="0" width="5" height="5" fill="#dad4ce"/><rect x="40" y="0" width="5" height="5" fill="#a2a8a9"/><rect x="45" y="0" width="5" height="5" fill="#faf6f4"/><rect x="50" y="0" width="5" height="5" fill="#a9a6ab"/><rect x="55" y="0" width="5" height="5" fill="#e7e8ee"/><rect x="60" y="0" width="5" height="5" fill="#a7a6ab"/><rect x="65" y="0" width="5" height="5" fill="#f2ecf2"/><rect x="70" y="0" width="5" height="5" fill="#edeeeb"/><rect x="75" y="0" width="5" height="5" fill="#e4e8ec"/><rect x="80" y="0" width="5" height="5" fill="#d0cacb"/><rect x="85" y="0" width="5" height="5" fill="#dfe3e6"/><rect x="90" y="0" width="5" height="5" fill="#f9f8f7"/><rect x="95" y="0" width="5" height="5" fill="#e6e9ef"/><rect x="100" y="0" width="5" height="5" fill="#a8a7a6"/><rect x="105" y="0" width="5" height="5" fill="#e4dfe4"/><rect x="110" y="0" width="4" height="5" fill="#fffef8"/><rect x="0" y="5" width="5" height="5" fill="#b1b2b8"/><rect x="5" y="5" width="5" height="5" fill="#e5eaf0"/><rect x="10" y="5" width="5" height="5" fill="#b9b6b2"/><rect x="15" y="5" width="5" height="5" fill="#a5a19d"/><rect x="20" y="5" width="5" height="5" fill="#d4cecc"/><rect x="25" y="5" width="5" height="5" fill="#a8abaa"/><rect x="30" y="5" width="5" height="5" fill="#bac0bf"/><rect x="35" y="5" width="5" height="5" fill="#e2e6e1"/><rect x="40" y="5" width="5" height="5" fill="#b3afb1"/><rect x="45" y="5" width="5" height="5" fill="#fbfefe"/><rect x="50" y="5" width="5" height="5" fill="#adaba9"/><rect x="55" y="5" width="5" height="5" fill="#f5eff5"/><rect x="60" y="5" width="5" height="5" fill="#a5a7a1"/><rect x="65" y="5" width="5" height="5" fill="#faf6fc"/><rect x="70" y="5" width="5" height="5" fill="#fcfaf7"/><rect x="75" y="5" width="5" height="5" fill="#f3eff0"/><rect x="80" y="5" width="5" height="5" fill="#c9cece"/><rect x="85" y="5" width="5" height="5" fill="#d6d2cf"/><rect x="90" y="5" width="5" height="5" fill="#d0d1d3"/><rect x="95" y="5" width="5" height="5" fill="#dddfe1"/><rect x="100" y="5" width="5" height="5" fill="#a4a29d"/><rect x="105" y="5" width="5" height="5" fill="#d1ccd0"/><rect x="110" y="5" width="4" height="5" fill="#d0cece"/></svg><svg style="position:absolute;left:844px;top:677px;overflow:visible;z-index:9;" width="114" height="15" viewBox="0 0 114 15"><rect x="0" y="0" width="5" height="5" fill="#c3c5c2"/><rect x="5" y="0" width="5" height="5" fill="#ebe5e1"/><rect x="10" y="0" width="5" height="5" fill="#cac4c1"/><rect x="15" y="0" width="5" height="5" fill="#e4e3e7"/><rect x="20" y="0" width="5" height="5" fill="#b0aaa8"/><rect x="25" y="0" width="5" height="5" fill="#e2e3e7"/><rect x="30" y="0" width="5" height="5" fill="#c4c1bf"/><rect x="35" y="0" width="5" height="5" fill="#e6e6eb"/><rect x="40" y="0" width="5" height="5" fill="#ecebef"/><rect x="45" y="0" width="5" height="5" fill="#e8e5e3"/><rect x="50" y="0" width="5" height="5" fill="#bdc2c0"/><rect x="55" y="0" width="5" height="5" fill="#caccd0"/><rect x="60" y="0" width="5" height="5" fill="#efeae9"/><rect x="65" y="0" width="5" height="5" fill="#dfdfe0"/><rect x="70" y="0" width="5" height="5" fill="#a5a3a1"/><rect x="75" y="0" width="5" height="5" fill="#cecbca"/><rect x="80" y="0" width="5" height="5" fill="#e6eaed"/><rect x="85" y="0" width="5" height="5" fill="#e0e3e5"/><rect x="90" y="0" width="5" height="5" fill="#fffffc"/><rect x="95" y="0" width="5" height="5" fill="#f2ede7"/><rect x="100" y="0" width="5" height="5" fill="#c1c4c4"/><rect x="105" y="0" width="5" height="5" fill="#eeebeb"/><rect x="110" y="0" width="4" height="5" fill="#d0cbc5"/><rect x="0" y="5" width="5" height="5" fill="#bec2c0"/><rect x="5" y="5" width="5" height="5" fill="#9da0a4"/><rect x="10" y="5" width="5" height="5" fill="#a7a29c"/><rect x="15" y="5" width="5" height="5" fill="#e2dfda"/><rect x="20" y="5" width="5" height="5" fill="#c7c6c1"/><rect x="25" y="5" width="5" height="5" fill="#ccd0cb"/><rect x="30" y="5" width="5" height="5" fill="#f8fcfc"/><rect x="35" y="5" width="5" height="5" fill="#e4eaeb"/><rect x="40" y="5" width="5" height="5" fill="#dbdee4"/><rect x="45" y="5" width="5" height="5" fill="#d2d2d0"/><rect x="50" y="5" width="5" height="5" fill="#dee2e2"/><rect x="55" y="5" width="5" height="5" fill="#fffbf6"/><rect x="60" y="5" width="5" height="5" fill="#c7c9c7"/><rect x="65" y="5" width="5" height="5" fill="#bbb6ba"/><rect x="70" y="5" width="5" height="5" fill="#fffbf9"/><rect x="75" y="5" width="5" height="5" fill="#b7b7bb"/><rect x="80" y="5" width="5" height="5" fill="#f3f0ee"/><rect x="85" y="5" width="5" height="5" fill="#e9e6e2"/><rect x="90" y="5" width="5" height="5" fill="#fafffb"/><rect x="95" y="5" width="5" height="5" fill="#efebee"/><rect x="100" y="5" width="5" height="5" fill="#e7eae8"/><rect x="105" y="5" width="5" height="5" fill="#dcdeda"/><rect x="110" y="5" width="4" height="5" fill="#d0d3d5"/><rect x="0" y="10" width="5" height="5" fill="#c6c6c8"/><rect x="5" y="10" width="5" height="5" fill="#d9ded8"/><rect x="10" y="10" width="5" height="5" fill="#b3b4b8"/><rect x="15" y="10" width="5" height="5" fill="#f1f6f6"/><rect x="20" y="10" width="5" height="5" fill="#ada7a8"/><rect x="25" y="10" width="5" height="5" fill="#f1eded"/><rect x="30" y="10" width="5" height="5" fill="#f9fcfb"/><rect x="35" y="10" width="5" height="5" fill="#eeecf0"/><rect x="40" y="10" width="5" height="5" fill="#e0e4e7"/><rect x="45" y="10" width="5" height="5" fill="#dfdfdf"/><rect x="50" y="10" width="5" height="5" fill="#f4efec"/><rect x="55" y="10" width="5" height="5" fill="#fffbf5"/><rect x="60" y="10" width="5" height="5" fill="#dbdfe0"/><rect x="65" y="10" width="5" height="5" fill="#eae6e4"/><rect x="70" y="10" width="5" height="5" fill="#a6aba5"/><rect x="75" y="10" width="5" height="5" fill="#dfdedb"/><rect x="80" y="10" width="5" height="5" fill="#f3f8f4"/><rect x="85" y="10" width="5" height="5" fill="#dde2e5"/><rect x="90" y="10" width="5" height="5" fill="#a6abaa"/><rect x="95" y="10" width="5" height="5" fill="#e9e9eb"/><rect x="100" y="10" width="5" height="5" fill="#a1a7ab"/><rect x="105" y="10" width="5" height="5" fill="#e6e8e9"/><rect x="110" y="10" width="4" height="5" fill="#d4d4d5"/></svg>
<span class="t" style="left:67.62px;top:277px;font-size:17.83px;color:#222;font-family:'Liberation Sans', sans-serif;">A</span><span class="t" style="left:163.26px;top:277px;font-size:17.83px;color:#222;font-family:'Liberation Sans', sans-serif;">B</span><span class="t" style="left:259.08px;top:277px;font-size:17.83px;color:#222;font-family:'Liberation Sans', sans-serif;">C</span><span class="t" style="left:354.72px;top:277px;font-size:17.83px;color:#222;font-family:'Liberation Sans', sans-serif;">D</span><span class="t" style="left:451.26px;top:277px;font-size:17.83px;color:#222;font-family:'Liberation Sans', sans-serif;">E</span><span class="t" style="left:547.62px;top:277px;font-size:17.83px;color:#222;font-family:'Liberation Sans', sans-serif;">F</span><span class="t" style="left:642.90px;top:277px;font-size:17.83px;color:#222;font-family:'Liberation Sans', sans-serif;">G</span><span class="t" style="left:739.08px;top:277px;font-size:17.83px;color:#222;font-family:'Liberation Sans', sans-serif;">H</span><span class="t" style="left:839.00px;top:277px;font-size:17.83px;color:#222;font-family:'Liberation Sans', sans-serif;">I</span><span class="t" style="left:933.40px;top:277px;font-size:17.83px;color:#222;font-family:'Liberation Sans', sans-serif;">J</span><span class="t" style="left:1026.90px;top:277px;font-size:17.83px;color:#222;font-family:'Liberation Sans', sans-serif;">K</span><span class="t" style="left:1124.15px;top:277px;font-size:17.83px;color:#222;font-family:'Liberation Sans', sans-serif;">L</span><span class="t" style="left:1218.01px;top:277px;font-size:17.83px;color:#222;font-family:'Liberation Sans', sans-serif;">M</span><span class="t" style="left:1315.08px;top:277px;font-size:17.83px;color:#222;font-family:'Liberation Sans', sans-serif;">N</span><span class="t" style="left:-0.85px;top:305px;font-size:17.83px;color:#222;font-family:'Liberation Sans', sans-serif;">1</span><span class="t" style="left:-0.49px;top:334px;font-size:17.83px;color:#222;font-family:'Liberation Sans', sans-serif;">2</span><span class="t" style="left:-0.49px;top:363px;font-size:17.83px;color:#222;font-family:'Liberation Sans', sans-serif;">3</span><span class="t" style="left:-0.49px;top:392px;font-size:17.83px;color:#222;font-family:'Liberation Sans', sans-serif;">4</span><span class="t" style="left:-0.49px;top:421px;font-size:17.83px;color:#222;font-family:'Liberation Sans', sans-serif;">5</span><span class="t" style="left:-0.49px;top:450px;font-size:17.83px;color:#222;font-family:'Liberation Sans', sans-serif;">6</span><span class="t" style="left:-0.49px;top:479px;font-size:17.83px;color:#222;font-family:'Liberation Sans', sans-serif;">7</span><span class="t" style="left:-0.49px;top:508px;font-size:17.83px;color:#222;font-family:'Liberation Sans', sans-serif;">8</span><span class="t" style="left:-0.49px;top:537px;font-size:17.83px;color:#222;font-family:'Liberation Sans', sans-serif;">9</span><span class="t" style="left:-5.84px;top:566px;font-size:17.83px;color:#222;font-family:'Liberation Sans', sans-serif;">10</span><span class="t" style="left:-5.13px;top:595px;font-size:17.83px;color:#222;font-family:'Liberation Sans', sans-serif;">11</span><span class="t" style="left:-5.66px;top:624px;font-size:17.83px;color:#222;font-family:'Liberation Sans', sans-serif;">12</span><span class="t" style="left:-5.84px;top:653px;font-size:17.83px;color:#222;font-family:'Liberation Sans', sans-serif;">13</span><span class="t" style="left:-5.84px;top:682px;font-size:17.83px;color:#222;font-family:'Liberation Sans', sans-serif;">14</span><span class="t" style="left:-5.84px;top:711px;font-size:17.83px;color:#222;font-family:'Liberation Sans', sans-serif;">15</span><span class="t" style="left:-5.84px;top:740px;font-size:17.83px;color:#222;font-family:'Liberation Sans', sans-serif;">16</span><span class="t" style="left:-5.66px;top:769px;font-size:17.83px;color:#222;font-family:'Liberation Sans', sans-serif;">17</span><span class="t" style="left:-5.84px;top:798px;font-size:17.83px;color:#222;font-family:'Liberation Sans', sans-serif;">18</span><span class="t" style="left:-5.66px;top:827px;font-size:17.83px;color:#222;font-family:'Liberation Sans', sans-serif;">19</span><span class="t" style="left:-5.48px;top:856px;font-size:17.83px;color:#222;font-family:'Liberation Sans', sans-serif;">20</span><span class="t" style="left:-5.31px;top:885px;font-size:17.83px;color:#222;font-family:'Liberation Sans', sans-serif;">21</span><span class="t" style="left:888.62px;top:3px;font-size:17.83px;color:#cde0d3;font-family:'Liberation Sans', sans-serif;transform:scaleX(0.9689);">Book1 - Excel</span><span class="t" style="left:13.37px;top:45px;font-size:17.83px;color:#ffffff;font-family:'Liberation Sans', sans-serif;transform:scaleX(0.9348);">File</span><span class="t" style="left:89.09px;top:45px;font-size:17.83px;color:#ffffff;font-family:'Liberation Sans', sans-serif;transform:scaleX(1.0621);">Home</span><span class="t" style="left:167.60px;top:45px;font-size:17.83px;color:#ffffff;font-family:'Liberation Sans', sans-serif;transform:scaleX(0.9803);">Insert</span><span class="t" style="left:240.32px;top:45px;font-size:17.83px;color:#ffffff;font-family:'Liberation Sans', sans-serif;transform:scaleX(0.9658);">Page Layout</span><span class="t" style="left:365.08px;top:45px;font-size:17.83px;color:#ffffff;font-family:'Liberation Sans', sans-serif;transform:scaleX(0.9960);">Formulas</span><span class="t" style="left:467.61px;top:45px;font-size:17.83px;color:#217346;font-family:'Liberation Sans', sans-serif;transform:scaleX(0.9732);">Data</span><span class="t" style="left:533.47px;top:45px;font-size:17.83px;color:#ffffff;font-family:'Liberation Sans', sans-serif;transform:scaleX(0.9324);">Review</span><span class="t" style="left:617.00px;top:45px;font-size:17.83px;color:#ffffff;font-family:'Liberation Sans', sans-serif;transform:scaleX(0.9529);">View</span><span class="t" style="left:708.64px;top:45px;font-size:17.83px;color:#e6efe8;font-family:'Liberation Sans', sans-serif;transform:scaleX(1.0135);">Tell me what you want to do...</span><span class="t" style="left:16.61px;top:84px;font-size:17.83px;color:#505050;font-family:'Liberation Sans', sans-serif;transform:scaleX(0.9711);">From Access</span><span class="t" style="left:16.57px;top:117px;font-size:17.83px;color:#505050;font-family:'Liberation Sans', sans-serif;">From Web</span><span class="t" style="left:16.60px;top:150px;font-size:17.83px;color:#505050;font-family:'Liberation Sans', sans-serif;transform:scaleX(0.9783);">From Text</span><span class="t" style="left:125.25px;top:132px;font-size:17.83px;color:#505050;font-family:'Liberation Sans', sans-serif;transform:scaleX(1.0200);">From Other</span><span class="t" style="left:134.73px;top:156px;font-size:17.83px;color:#505050;font-family:'Liberation Sans', sans-serif;transform:scaleX(0.9441);">Sources</span><span class="t" style="left:100.70px;top:183px;font-size:15.09px;color:#6a6a6a;font-family:'Liberation Sans', sans-serif;transform:scaleX(0.9890);">Get External Data</span><span class="t" style="left:251.41px;top:132px;font-size:17.83px;color:#505050;font-family:'Liberation Sans', sans-serif;transform:scaleX(0.9715);">Existing</span><span class="t" style="left:233.11px;top:156px;font-size:17.83px;color:#505050;font-family:'Liberation Sans', sans-serif;transform:scaleX(0.9700);">Connections</span><span class="t" style="left:357.59px;top:132px;font-size:17.83px;color:#505050;font-family:'Liberation Sans', sans-serif;transform:scaleX(0.9873);">New</span><span class="t" style="left:438.11px;top:84px;font-size:17.83px;color:#505050;font-family:'Liberation Sans', sans-serif;transform:scaleX(0.9697);">Show Queries</span><span class="t" style="left:437.58px;top:117px;font-size:17.83px;color:#505050;font-family:'Liberation Sans', sans-serif;transform:scaleX(0.9925);">From Table</span><span class="t" style="left:437.66px;top:149px;font-size:17.83px;color:#505050;font-family:'Liberation Sans', sans-serif;transform:scaleX(0.9374);">Recent Sources</span><span class="t" style="left:574.67px;top:132px;font-size:17.83px;color:#505050;font-family:'Liberation Sans', sans-serif;transform:scaleX(0.9348);">Refresh</span><span class="t" style="left:593.00px;top:156px;font-size:17.83px;color:#505050;font-family:'Liberation Sans', sans-serif;transform:scaleX(0.9700);">All</span><span class="t" style="left:665.29px;top:84px;font-size:17.83px;color:#505050;font-family:'Liberation Sans', sans-serif;transform:scaleX(0.9927);">Connections</span><span class="t" style="left:665.58px;top:117px;font-size:17.83px;color:#a6a6a6;font-family:'Liberation Sans', sans-serif;transform:scaleX(0.9979);">Properties</span><span class="t" style="left:665.62px;top:149px;font-size:17.83px;color:#a6a6a6;font-family:'Liberation Sans', sans-serif;transform:scaleX(0.9700);">Edit Links</span><span class="t" style="left:821.27px;top:132px;font-size:17.83px;color:#505050;font-family:'Liberation Sans', sans-serif;transform:scaleX(1.0282);">Sort</span><span class="t" style="left:886.58px;top:132px;font-size:17.83px;color:#505050;font-family:'Liberation Sans', sans-serif;transform:scaleX(0.9959);">Filter</span><span class="t" style="left:965.33px;top:84px;font-size:17.83px;color:#a6a6a6;font-family:'Liberation Sans', sans-serif;transform:scaleX(0.9348);">Clear</span><span class="t" style="left:965.64px;top:117px;font-size:17.83px;color:#a6a6a6;font-family:'Liberation Sans', sans-serif;transform:scaleX(0.9556);">Reapply</span><span class="t" style="left:966.00px;top:149px;font-size:17.83px;color:#505050;font-family:'Liberation Sans', sans-serif;transform:scaleX(0.9700);">Advanced</span><span class="t" style="left:1072.65px;top:132px;font-size:17.83px;color:#505050;font-family:'Liberation Sans', sans-serif;transform:scaleX(0.9737);">Text to</span><span class="t" style="left:1063.31px;top:156px;font-size:17.83px;color:#505050;font-family:'Liberation Sans', sans-serif;transform:scaleX(0.9700);">Columns</span><span class="t" style="left:1165.65px;top:82px;font-size:17.83px;color:#505050;font-family:'Liberation Sans', sans-serif;transform:scaleX(0.9444);">Flash Fill</span><span class="t" style="left:1165.61px;top:113px;font-size:17.83px;color:#505050;font-family:'Liberation Sans', sans-serif;transform:scaleX(0.9763);">Remove Duplicates</span><span class="t" style="left:1165.56px;top:144px;font-size:17.83px;color:#505050;font-family:'Liberation Sans', sans-serif;transform:scaleX(1.0089);">Data Validation</span><span class="t" style="left:1353.31px;top:82px;font-size:17.83px;color:#505050;font-family:'Liberation Sans', sans-serif;transform:scaleX(0.9700);">Consolidate</span><span class="t" style="left:1352.62px;top:113px;font-size:17.83px;color:#a6a6a6;font-family:'Liberation Sans', sans-serif;transform:scaleX(0.9700);">Relationships</span><span class="t" style="left:1226.80px;top:183px;font-size:15.09px;color:#6a6a6a;font-family:'Liberation Sans', sans-serif;transform:scaleX(0.9940);">Data Tools</span><span class="t" style="left:0.00px;top:229px;font-size:17.83px;color:#222;font-family:'Liberation Sans', sans-serif;">A1</span><span class="t" style="left:331.44px;top:172px;font-size:17.83px;color:#999;font-family:'Liberation Sans', sans-serif;transform:scaleX(1.0103);z-index:6;">Text Import Wizard - Step 2 of 3</span><span class="t" style="left:1111.42px;top:172px;font-size:17.83px;color:#888;font-family:'Liberation Sans', sans-serif;transform:scaleX(0.8179);z-index:6;">?</span><span class="t" style="left:330.69px;top:216px;font-size:15.09px;color:#000;font-family:'Liberation Sans', sans-serif;transform:scaleX(1.0280);z-index:6;">This screen lets you set the delimiters your data contains.  You can see how your text is affected in the preview below.</span><span class="t" style="left:339.62px;top:255px;font-size:15.09px;color:#000;font-family:'Liberation Sans', sans-serif;transform:scaleX(1.0643);z-index:6;">Delimiters</span><span class="t" style="left:371.39px;top:289px;font-size:15.09px;color:#000;font-family:'Liberation Sans', sans-serif;transform:scaleX(1.0200);z-index:6;">Tab</span><span class="t" style="left:371.07px;top:320px;font-size:15.09px;color:#000;font-family:'Liberation Sans', sans-serif;transform:scaleX(1.0374);z-index:6;">Se<u>m</u>icolon</span><span class="t" style="left:371.08px;top:351px;font-size:15.09px;color:#000;font-family:'Liberation Sans', sans-serif;transform:scaleX(1.0200);z-index:6;"><u>C</u>omma</span><span class="t" style="left:371.08px;top:382px;font-size:15.09px;color:#000;font-family:'Liberation Sans', sans-serif;transform:scaleX(1.0200);z-index:6;"><u>S</u>pace</span><span class="t" style="left:371.08px;top:415px;font-size:15.09px;color:#000;font-family:'Liberation Sans', sans-serif;transform:scaleX(1.0200);z-index:6;"><u>O</u>ther:</span><span class="t" style="left:536.79px;top:317px;font-size:15.09px;color:#000;font-family:'Liberation Sans', sans-serif;transform:scaleX(1.0220);z-index:6;">T<u>r</u>eat consecutive delimiters as one</span><span class="t" style="left:511.69px;top:365px;font-size:15.09px;color:#000;font-family:'Liberation Sans', sans-serif;transform:scaleX(1.0433);z-index:6;">Text <u>q</u>ualifier:</span><span class="t" style="left:623.00px;top:365px;font-size:15.09px;color:#000;font-family:'Liberation Sans', sans-serif;z-index:6;">&quot;</span><span class="t" style="left:339.55px;top:553px;font-size:15.09px;color:#000;font-family:'Liberation Sans', sans-serif;transform:scaleX(1.0343);z-index:6;">Data <u>p</u>review</span><span class="t" style="left:345.33px;top:624px;font-size:15px;color:#000;font-family:'Liberation Mono', monospace;transform:scaleX(1.1111);z-index:6;-webkit-text-stroke:0.2px #fff;">SHOP_ID</span><span class="t" style="left:434.67px;top:624px;font-size:15px;color:#000;font-family:'Liberation Mono', monospace;transform:scaleX(1.1111);z-index:6;-webkit-text-stroke:0.2px #fff;">PAYMENTDATE</span><span class="t" style="left:554.67px;top:624px;font-size:15px;color:#000;font-family:'Liberation Mono', monospace;transform:scaleX(1.1111);z-index:6;-webkit-text-stroke:0.2px #fff;">PAYMENTMONTH</span><span class="t" style="left:685.33px;top:624px;font-size:15px;color:#000;font-family:'Liberation Mono', monospace;transform:scaleX(1.1111);z-index:6;-webkit-text-stroke:0.2px #fff;">SHOPNAME</span><span class="t" style="left:776.00px;top:624px;font-size:15px;color:#000;font-family:'Liberation Mono', monospace;transform:scaleX(1.1111);z-index:6;-webkit-text-stroke:0.2px #fff;">AMOUNT</span><span class="t" style="left:844.67px;top:624px;font-size:15px;color:#000;font-family:'Liberation Mono', monospace;transform:scaleX(1.1111);z-index:6;-webkit-text-stroke:0.2px #fff;">DESCRIPTOR</span><span class="t" style="left:965.33px;top:624px;font-size:15px;color:#000;font-family:'Liberation Mono', monospace;transform:scaleX(1.1111);z-index:6;-webkit-text-stroke:0.2px #fff;">SHOPINVOICE_ID</span><span class="t" style="left:1115.33px;top:624px;font-size:15px;color:#000;font-family:'Liberation Mono', monospace;transform:scaleX(1.1111);z-index:6;-webkit-text-stroke:0.2px #fff;">SHOPSC</span><span class="t" style="left:1115.33px;top:642px;font-size:15px;color:#000;font-family:'Liberation Mono', monospace;transform:scaleX(1.1111);z-index:6;-webkit-text-stroke:0.2px #fff;">OpenIn</span><span class="t" style="left:435.00px;top:642px;font-size:15px;color:#000;font-family:'Liberation Mono', monospace;transform:scaleX(1.1111);z-index:6;-webkit-text-stroke:0.2px #fff;">2</span><span class="t" style="left:1115.33px;top:660px;font-size:15px;color:#000;font-family:'Liberation Mono', monospace;transform:scaleX(1.1111);z-index:6;-webkit-text-stroke:0.2px #fff;">OpenIn</span><span class="t" style="left:435.00px;top:660px;font-size:15px;color:#000;font-family:'Liberation Mono', monospace;transform:scaleX(1.1111);z-index:6;-webkit-text-stroke:0.2px #fff;">2</span><span class="t" style="left:1115.33px;top:678px;font-size:15px;color:#000;font-family:'Liberation Mono', monospace;transform:scaleX(1.1111);z-index:6;-webkit-text-stroke:0.2px #fff;">OpenIn</span><span class="t" style="left:435.00px;top:678px;font-size:15px;color:#000;font-family:'Liberation Mono', monospace;transform:scaleX(1.1111);z-index:6;-webkit-text-stroke:0.2px #fff;">2</span><span class="t" style="left:555.00px;top:642px;font-size:15px;color:#000;font-family:'Liberation Mono', monospace;transform:scaleX(1.1111);z-index:6;-webkit-text-stroke:0.2px #fff;">2</span><span class="t" style="left:703.90px;top:815px;font-size:15.09px;color:#000;font-family:'Liberation Sans', sans-serif;transform:scaleX(0.9918);z-index:6;">Cancel</span><span class="t" style="left:844.10px;top:815px;font-size:15.09px;color:#000;font-family:'Liberation Sans', sans-serif;transform:scaleX(0.9875);z-index:6;">&lt; <u>B</u>ack</span><span class="t" style="left:981.80px;top:815px;font-size:15.09px;color:#000;font-family:'Liberation Sans', sans-serif;transform:scaleX(1.0792);z-index:6;"><u>N</u>ext &gt;</span><span class="t" style="left:1125.33px;top:815px;font-size:15.09px;color:#000;font-family:'Liberation Sans', sans-serif;transform:scaleX(1.0519);z-index:6;"><u>F</u>inish</span>
</body></html>
